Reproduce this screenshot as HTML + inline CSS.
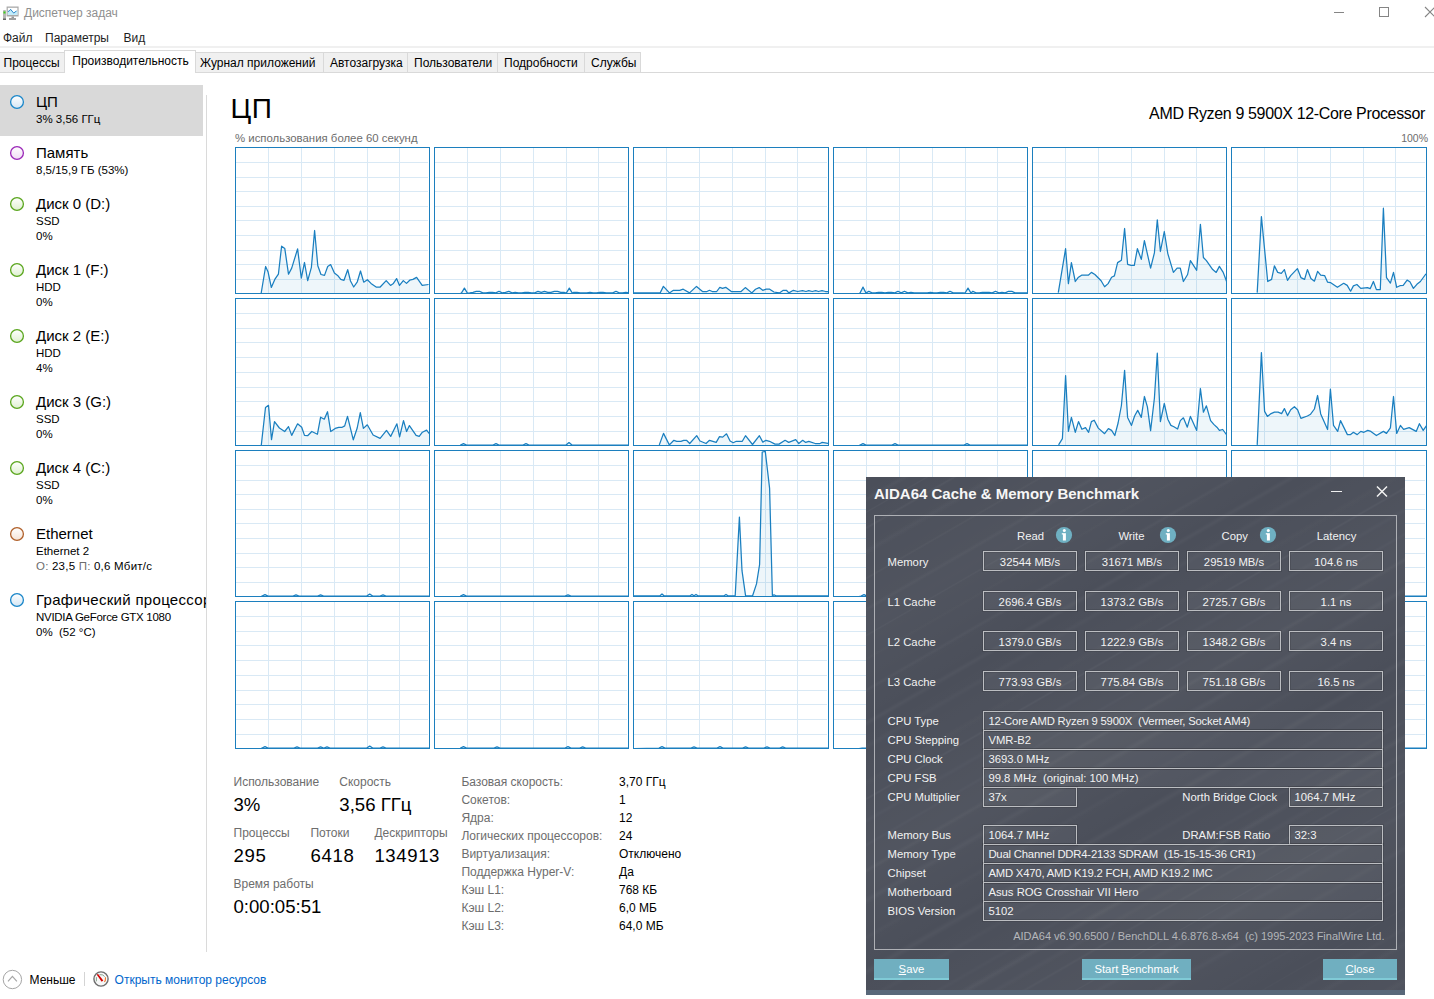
<!DOCTYPE html>
<html><head><meta charset="utf-8"><title>Task Manager</title>
<style>
html,body{margin:0;padding:0;width:1434px;height:999px;overflow:hidden;background:#fff;position:relative}
.t{position:absolute;line-height:0;white-space:nowrap;font-family:"Liberation Sans", sans-serif}
u{text-underline-offset:1px}
</style></head><body>
<svg style="position:absolute;left:0;top:0" width="24" height="24" viewBox="0 0 24 24">
<rect x="3" y="10" width="3" height="10" rx="1" fill="#b8b8b8"/><rect x="3" y="18.5" width="3" height="1.5" fill="#666"/>
<rect x="3.5" y="11.5" width="2" height="2" fill="#3ecf1a"/>
<rect x="6.6" y="6.5" width="12" height="10" fill="#a9a9a9"/>
<rect x="7.8" y="7.8" width="9.6" height="7.2" fill="#fff"/>
<path d="M7.8 11.3 L9 11.3 L10.6 9.3 L13.7 13.1 L15 12 L17.4 10.7 L17.4 15 L7.8 15 Z" fill="#c3ecfb"/>
<path d="M7.8 11.3 L9 11.3 L10.6 9.3 L13.7 13.1 L15 12 L16.6 11" fill="none" stroke="#2a86c8" stroke-width="1"/>
<rect x="11.5" y="16.5" width="2.5" height="1.5" fill="#999"/><rect x="9" y="18" width="7" height="2" fill="#a0a0a0"/>
</svg>
<div class="t" style="left:24px;top:13px;font-size:12px;color:#8f8f8f;font-weight:400;">Диспетчер задач</div>
<div style="position:absolute;left:1334px;top:12px;width:10px;height:1px;background:#858585"></div>
<div style="position:absolute;left:1379px;top:7px;width:10px;height:10px;box-sizing:border-box;border:1px solid #858585"></div>
<svg style="position:absolute;left:1420;top:0;left:1420px" width="14" height="24"><path d="M5 7 L15 17 M15 7 L5 17" stroke="#858585" stroke-width="1.1"/></svg>
<div class="t" style="left:3px;top:38px;font-size:12px;color:#1e1e1e;font-weight:400;">Файл</div>
<div class="t" style="left:45px;top:38px;font-size:12px;color:#1e1e1e;font-weight:400;">Параметры</div>
<div class="t" style="left:123.5px;top:38px;font-size:12px;color:#1e1e1e;font-weight:400;">Вид</div>
<div style="position:absolute;left:0px;top:46px;width:1434px;height:2px;background:#f0f0f0"></div>
<div style="position:absolute;left:0px;top:72px;width:1434px;height:1px;background:#d9d9d9"></div>
<div style="position:absolute;left:-1px;top:52px;width:66px;height:21px;box-sizing:border-box;border:1px solid #d9d9d9;background:#f0f0f0"></div>
<div class="t" style="left:3.5px;top:62.5px;font-size:12px;color:#000;font-weight:400;">Процессы</div>
<div style="position:absolute;left:195px;top:52px;width:129px;height:21px;box-sizing:border-box;border:1px solid #d9d9d9;background:#f0f0f0"></div>
<div class="t" style="left:200px;top:62.5px;font-size:12px;color:#000;font-weight:400;">Журнал приложений</div>
<div style="position:absolute;left:323px;top:52px;width:85px;height:21px;box-sizing:border-box;border:1px solid #d9d9d9;background:#f0f0f0"></div>
<div class="t" style="left:330px;top:62.5px;font-size:12px;color:#000;font-weight:400;">Автозагрузка</div>
<div style="position:absolute;left:407px;top:52px;width:91px;height:21px;box-sizing:border-box;border:1px solid #d9d9d9;background:#f0f0f0"></div>
<div class="t" style="left:414px;top:62.5px;font-size:12px;color:#000;font-weight:400;">Пользователи</div>
<div style="position:absolute;left:497px;top:52px;width:88px;height:21px;box-sizing:border-box;border:1px solid #d9d9d9;background:#f0f0f0"></div>
<div class="t" style="left:504px;top:62.5px;font-size:12px;color:#000;font-weight:400;">Подробности</div>
<div style="position:absolute;left:584px;top:52px;width:57px;height:21px;box-sizing:border-box;border:1px solid #d9d9d9;background:#f0f0f0"></div>
<div class="t" style="left:591px;top:62.5px;font-size:12px;color:#000;font-weight:400;">Службы</div>
<div style="position:absolute;left:64px;top:50px;width:132px;height:23px;box-sizing:border-box;border:1px solid #d9d9d9;border-bottom:none;background:#fff"></div>
<div class="t" style="left:72.3px;top:61px;font-size:12px;color:#000;font-weight:400;">Производительность</div>
<div style="position:absolute;left:0px;top:85px;width:203px;height:51px;background:#d9d9d9"></div>
<div style="position:absolute;left:206px;top:95px;width:1px;height:857px;background:#dadada"></div>
<div style="position:absolute;left:0;top:0;width:206px;height:999px;overflow:hidden">
<svg style="position:absolute;left:9px;top:94px" width="16" height="16"><defs><linearGradient id="g102" x1="0" y1="0" x2="0" y2="1"><stop offset="0" stop-color="#fff"/><stop offset="1" stop-color="#d4e6f4"/></linearGradient></defs><circle cx="8" cy="8" r="6.4" fill="url(#g102)" stroke="#1a86c9" stroke-width="1.3"/></svg>
<div class="t" style="left:36px;top:102px;font-size:15px;color:#000;font-weight:400;">ЦП</div>
<div class="t" style="left:36px;top:119px;font-size:11.5px;color:#000;font-weight:400;">3% 3,56 ГГц</div>
<svg style="position:absolute;left:9px;top:145px" width="16" height="16"><defs><linearGradient id="g153" x1="0" y1="0" x2="0" y2="1"><stop offset="0" stop-color="#fff"/><stop offset="1" stop-color="#f0dcf5"/></linearGradient></defs><circle cx="8" cy="8" r="6.4" fill="url(#g153)" stroke="#9b28b8" stroke-width="1.3"/></svg>
<div class="t" style="left:36px;top:153px;font-size:15px;color:#000;font-weight:400;">Память</div>
<div class="t" style="left:36px;top:170px;font-size:11.5px;color:#000;font-weight:400;">8,5/15,9 ГБ (53%)</div>
<svg style="position:absolute;left:9px;top:196px" width="16" height="16"><defs><linearGradient id="g204" x1="0" y1="0" x2="0" y2="1"><stop offset="0" stop-color="#fff"/><stop offset="1" stop-color="#dff0d0"/></linearGradient></defs><circle cx="8" cy="8" r="6.4" fill="url(#g204)" stroke="#5aa61e" stroke-width="1.3"/></svg>
<div class="t" style="left:36px;top:204px;font-size:15px;color:#000;font-weight:400;">Диск 0 (D:)</div>
<div class="t" style="left:36px;top:221px;font-size:11.5px;color:#000;font-weight:400;">SSD</div>
<div class="t" style="left:36px;top:236px;font-size:11.5px;color:#000;font-weight:400;">0%</div>
<svg style="position:absolute;left:9px;top:262px" width="16" height="16"><defs><linearGradient id="g270" x1="0" y1="0" x2="0" y2="1"><stop offset="0" stop-color="#fff"/><stop offset="1" stop-color="#dff0d0"/></linearGradient></defs><circle cx="8" cy="8" r="6.4" fill="url(#g270)" stroke="#5aa61e" stroke-width="1.3"/></svg>
<div class="t" style="left:36px;top:270px;font-size:15px;color:#000;font-weight:400;">Диск 1 (F:)</div>
<div class="t" style="left:36px;top:287px;font-size:11.5px;color:#000;font-weight:400;">HDD</div>
<div class="t" style="left:36px;top:302px;font-size:11.5px;color:#000;font-weight:400;">0%</div>
<svg style="position:absolute;left:9px;top:328px" width="16" height="16"><defs><linearGradient id="g336" x1="0" y1="0" x2="0" y2="1"><stop offset="0" stop-color="#fff"/><stop offset="1" stop-color="#dff0d0"/></linearGradient></defs><circle cx="8" cy="8" r="6.4" fill="url(#g336)" stroke="#5aa61e" stroke-width="1.3"/></svg>
<div class="t" style="left:36px;top:336px;font-size:15px;color:#000;font-weight:400;">Диск 2 (E:)</div>
<div class="t" style="left:36px;top:353px;font-size:11.5px;color:#000;font-weight:400;">HDD</div>
<div class="t" style="left:36px;top:368px;font-size:11.5px;color:#000;font-weight:400;">4%</div>
<svg style="position:absolute;left:9px;top:394px" width="16" height="16"><defs><linearGradient id="g402" x1="0" y1="0" x2="0" y2="1"><stop offset="0" stop-color="#fff"/><stop offset="1" stop-color="#dff0d0"/></linearGradient></defs><circle cx="8" cy="8" r="6.4" fill="url(#g402)" stroke="#5aa61e" stroke-width="1.3"/></svg>
<div class="t" style="left:36px;top:402px;font-size:15px;color:#000;font-weight:400;">Диск 3 (G:)</div>
<div class="t" style="left:36px;top:419px;font-size:11.5px;color:#000;font-weight:400;">SSD</div>
<div class="t" style="left:36px;top:434px;font-size:11.5px;color:#000;font-weight:400;">0%</div>
<svg style="position:absolute;left:9px;top:460px" width="16" height="16"><defs><linearGradient id="g468" x1="0" y1="0" x2="0" y2="1"><stop offset="0" stop-color="#fff"/><stop offset="1" stop-color="#dff0d0"/></linearGradient></defs><circle cx="8" cy="8" r="6.4" fill="url(#g468)" stroke="#5aa61e" stroke-width="1.3"/></svg>
<div class="t" style="left:36px;top:468px;font-size:15px;color:#000;font-weight:400;">Диск 4 (C:)</div>
<div class="t" style="left:36px;top:485px;font-size:11.5px;color:#000;font-weight:400;">SSD</div>
<div class="t" style="left:36px;top:500px;font-size:11.5px;color:#000;font-weight:400;">0%</div>
<svg style="position:absolute;left:9px;top:526px" width="16" height="16"><defs><linearGradient id="g534" x1="0" y1="0" x2="0" y2="1"><stop offset="0" stop-color="#fff"/><stop offset="1" stop-color="#f5e3d6"/></linearGradient></defs><circle cx="8" cy="8" r="6.4" fill="url(#g534)" stroke="#b0602a" stroke-width="1.3"/></svg>
<div class="t" style="left:36px;top:534px;font-size:15px;color:#000;font-weight:400;">Ethernet</div>
<div class="t" style="left:36px;top:551px;font-size:11.5px;color:#000;font-weight:400;">Ethernet 2</div>
<div class="t" style="left:36px;top:566px;font-size:11.5px;color:#000;font-weight:400;letter-spacing:0.22px;"><span style="color:#6d6d6d">О:</span> 23,5 <span style="color:#6d6d6d">П:</span> 0,6 Мбит/с</div>
<svg style="position:absolute;left:9px;top:592px" width="16" height="16"><defs><linearGradient id="g600" x1="0" y1="0" x2="0" y2="1"><stop offset="0" stop-color="#fff"/><stop offset="1" stop-color="#d4e6f4"/></linearGradient></defs><circle cx="8" cy="8" r="6.4" fill="url(#g600)" stroke="#1a86c9" stroke-width="1.3"/></svg>
<div class="t" style="left:36px;top:600px;font-size:15px;color:#000;font-weight:400;letter-spacing:0.3px;">Графический процессор</div>
<div class="t" style="left:36px;top:617px;font-size:11.5px;color:#000;font-weight:400;letter-spacing:-0.28px;">NVIDIA GeForce GTX 1080</div>
<div class="t" style="left:36px;top:632px;font-size:11.5px;color:#000;font-weight:400;">0% &nbsp;(52 °C)</div>
</div>
<div class="t" style="left:230.5px;top:109px;font-size:28px;color:#000;font-weight:400;letter-spacing:0.6px;">ЦП</div>
<div class="t" style="right:9px;top:114px;font-size:16px;color:#000;font-weight:400;letter-spacing:-0.35px;">AMD Ryzen 9 5900X 12-Core Processor</div>
<div class="t" style="left:235px;top:138px;font-size:11.4px;color:#6d6d6d;font-weight:400;">% использования более 60 секунд</div>
<div class="t" style="right:6px;top:138px;font-size:10.5px;color:#6d6d6d;font-weight:400;">100%</div>
<svg style="position:absolute;left:0;top:0" width="1434" height="999">
<g shape-rendering="crispEdges" fill="#d9e9f5">
<rect x="236" y="162" width="192" height="1"/>
<rect x="236" y="177" width="192" height="1"/>
<rect x="236" y="191" width="192" height="1"/>
<rect x="236" y="206" width="192" height="1"/>
<rect x="236" y="220" width="192" height="1"/>
<rect x="236" y="235" width="192" height="1"/>
<rect x="236" y="250" width="192" height="1"/>
<rect x="236" y="264" width="192" height="1"/>
<rect x="236" y="279" width="192" height="1"/>
<rect x="268" y="148" width="1" height="145"/>
<rect x="301" y="148" width="1" height="145"/>
<rect x="334" y="148" width="1" height="145"/>
<rect x="367" y="148" width="1" height="145"/>
<rect x="399" y="148" width="1" height="145"/>
<rect x="435" y="162" width="192" height="1"/>
<rect x="435" y="177" width="192" height="1"/>
<rect x="435" y="191" width="192" height="1"/>
<rect x="435" y="206" width="192" height="1"/>
<rect x="435" y="220" width="192" height="1"/>
<rect x="435" y="235" width="192" height="1"/>
<rect x="435" y="250" width="192" height="1"/>
<rect x="435" y="264" width="192" height="1"/>
<rect x="435" y="279" width="192" height="1"/>
<rect x="467" y="148" width="1" height="145"/>
<rect x="500" y="148" width="1" height="145"/>
<rect x="533" y="148" width="1" height="145"/>
<rect x="566" y="148" width="1" height="145"/>
<rect x="598" y="148" width="1" height="145"/>
<rect x="634" y="162" width="193" height="1"/>
<rect x="634" y="177" width="193" height="1"/>
<rect x="634" y="191" width="193" height="1"/>
<rect x="634" y="206" width="193" height="1"/>
<rect x="634" y="220" width="193" height="1"/>
<rect x="634" y="235" width="193" height="1"/>
<rect x="634" y="250" width="193" height="1"/>
<rect x="634" y="264" width="193" height="1"/>
<rect x="634" y="279" width="193" height="1"/>
<rect x="666" y="148" width="1" height="145"/>
<rect x="699" y="148" width="1" height="145"/>
<rect x="732" y="148" width="1" height="145"/>
<rect x="765" y="148" width="1" height="145"/>
<rect x="797" y="148" width="1" height="145"/>
<rect x="834" y="162" width="192" height="1"/>
<rect x="834" y="177" width="192" height="1"/>
<rect x="834" y="191" width="192" height="1"/>
<rect x="834" y="206" width="192" height="1"/>
<rect x="834" y="220" width="192" height="1"/>
<rect x="834" y="235" width="192" height="1"/>
<rect x="834" y="250" width="192" height="1"/>
<rect x="834" y="264" width="192" height="1"/>
<rect x="834" y="279" width="192" height="1"/>
<rect x="866" y="148" width="1" height="145"/>
<rect x="899" y="148" width="1" height="145"/>
<rect x="932" y="148" width="1" height="145"/>
<rect x="965" y="148" width="1" height="145"/>
<rect x="997" y="148" width="1" height="145"/>
<rect x="1033" y="162" width="192" height="1"/>
<rect x="1033" y="177" width="192" height="1"/>
<rect x="1033" y="191" width="192" height="1"/>
<rect x="1033" y="206" width="192" height="1"/>
<rect x="1033" y="220" width="192" height="1"/>
<rect x="1033" y="235" width="192" height="1"/>
<rect x="1033" y="250" width="192" height="1"/>
<rect x="1033" y="264" width="192" height="1"/>
<rect x="1033" y="279" width="192" height="1"/>
<rect x="1065" y="148" width="1" height="145"/>
<rect x="1098" y="148" width="1" height="145"/>
<rect x="1131" y="148" width="1" height="145"/>
<rect x="1164" y="148" width="1" height="145"/>
<rect x="1196" y="148" width="1" height="145"/>
<rect x="1232" y="162" width="193" height="1"/>
<rect x="1232" y="177" width="193" height="1"/>
<rect x="1232" y="191" width="193" height="1"/>
<rect x="1232" y="206" width="193" height="1"/>
<rect x="1232" y="220" width="193" height="1"/>
<rect x="1232" y="235" width="193" height="1"/>
<rect x="1232" y="250" width="193" height="1"/>
<rect x="1232" y="264" width="193" height="1"/>
<rect x="1232" y="279" width="193" height="1"/>
<rect x="1264" y="148" width="1" height="145"/>
<rect x="1297" y="148" width="1" height="145"/>
<rect x="1330" y="148" width="1" height="145"/>
<rect x="1363" y="148" width="1" height="145"/>
<rect x="1395" y="148" width="1" height="145"/>
<rect x="236" y="313" width="192" height="1"/>
<rect x="236" y="328" width="192" height="1"/>
<rect x="236" y="342" width="192" height="1"/>
<rect x="236" y="357" width="192" height="1"/>
<rect x="236" y="372" width="192" height="1"/>
<rect x="236" y="387" width="192" height="1"/>
<rect x="236" y="401" width="192" height="1"/>
<rect x="236" y="416" width="192" height="1"/>
<rect x="236" y="431" width="192" height="1"/>
<rect x="268" y="299" width="1" height="146"/>
<rect x="301" y="299" width="1" height="146"/>
<rect x="334" y="299" width="1" height="146"/>
<rect x="367" y="299" width="1" height="146"/>
<rect x="399" y="299" width="1" height="146"/>
<rect x="435" y="313" width="192" height="1"/>
<rect x="435" y="328" width="192" height="1"/>
<rect x="435" y="342" width="192" height="1"/>
<rect x="435" y="357" width="192" height="1"/>
<rect x="435" y="372" width="192" height="1"/>
<rect x="435" y="387" width="192" height="1"/>
<rect x="435" y="401" width="192" height="1"/>
<rect x="435" y="416" width="192" height="1"/>
<rect x="435" y="431" width="192" height="1"/>
<rect x="467" y="299" width="1" height="146"/>
<rect x="500" y="299" width="1" height="146"/>
<rect x="533" y="299" width="1" height="146"/>
<rect x="566" y="299" width="1" height="146"/>
<rect x="598" y="299" width="1" height="146"/>
<rect x="634" y="313" width="193" height="1"/>
<rect x="634" y="328" width="193" height="1"/>
<rect x="634" y="342" width="193" height="1"/>
<rect x="634" y="357" width="193" height="1"/>
<rect x="634" y="372" width="193" height="1"/>
<rect x="634" y="387" width="193" height="1"/>
<rect x="634" y="401" width="193" height="1"/>
<rect x="634" y="416" width="193" height="1"/>
<rect x="634" y="431" width="193" height="1"/>
<rect x="666" y="299" width="1" height="146"/>
<rect x="699" y="299" width="1" height="146"/>
<rect x="732" y="299" width="1" height="146"/>
<rect x="765" y="299" width="1" height="146"/>
<rect x="797" y="299" width="1" height="146"/>
<rect x="834" y="313" width="192" height="1"/>
<rect x="834" y="328" width="192" height="1"/>
<rect x="834" y="342" width="192" height="1"/>
<rect x="834" y="357" width="192" height="1"/>
<rect x="834" y="372" width="192" height="1"/>
<rect x="834" y="387" width="192" height="1"/>
<rect x="834" y="401" width="192" height="1"/>
<rect x="834" y="416" width="192" height="1"/>
<rect x="834" y="431" width="192" height="1"/>
<rect x="866" y="299" width="1" height="146"/>
<rect x="899" y="299" width="1" height="146"/>
<rect x="932" y="299" width="1" height="146"/>
<rect x="965" y="299" width="1" height="146"/>
<rect x="997" y="299" width="1" height="146"/>
<rect x="1033" y="313" width="192" height="1"/>
<rect x="1033" y="328" width="192" height="1"/>
<rect x="1033" y="342" width="192" height="1"/>
<rect x="1033" y="357" width="192" height="1"/>
<rect x="1033" y="372" width="192" height="1"/>
<rect x="1033" y="387" width="192" height="1"/>
<rect x="1033" y="401" width="192" height="1"/>
<rect x="1033" y="416" width="192" height="1"/>
<rect x="1033" y="431" width="192" height="1"/>
<rect x="1065" y="299" width="1" height="146"/>
<rect x="1098" y="299" width="1" height="146"/>
<rect x="1131" y="299" width="1" height="146"/>
<rect x="1164" y="299" width="1" height="146"/>
<rect x="1196" y="299" width="1" height="146"/>
<rect x="1232" y="313" width="193" height="1"/>
<rect x="1232" y="328" width="193" height="1"/>
<rect x="1232" y="342" width="193" height="1"/>
<rect x="1232" y="357" width="193" height="1"/>
<rect x="1232" y="372" width="193" height="1"/>
<rect x="1232" y="387" width="193" height="1"/>
<rect x="1232" y="401" width="193" height="1"/>
<rect x="1232" y="416" width="193" height="1"/>
<rect x="1232" y="431" width="193" height="1"/>
<rect x="1264" y="299" width="1" height="146"/>
<rect x="1297" y="299" width="1" height="146"/>
<rect x="1330" y="299" width="1" height="146"/>
<rect x="1363" y="299" width="1" height="146"/>
<rect x="1395" y="299" width="1" height="146"/>
<rect x="236" y="465" width="192" height="1"/>
<rect x="236" y="480" width="192" height="1"/>
<rect x="236" y="494" width="192" height="1"/>
<rect x="236" y="509" width="192" height="1"/>
<rect x="236" y="523" width="192" height="1"/>
<rect x="236" y="538" width="192" height="1"/>
<rect x="236" y="553" width="192" height="1"/>
<rect x="236" y="567" width="192" height="1"/>
<rect x="236" y="582" width="192" height="1"/>
<rect x="268" y="451" width="1" height="145"/>
<rect x="301" y="451" width="1" height="145"/>
<rect x="334" y="451" width="1" height="145"/>
<rect x="367" y="451" width="1" height="145"/>
<rect x="399" y="451" width="1" height="145"/>
<rect x="435" y="465" width="192" height="1"/>
<rect x="435" y="480" width="192" height="1"/>
<rect x="435" y="494" width="192" height="1"/>
<rect x="435" y="509" width="192" height="1"/>
<rect x="435" y="523" width="192" height="1"/>
<rect x="435" y="538" width="192" height="1"/>
<rect x="435" y="553" width="192" height="1"/>
<rect x="435" y="567" width="192" height="1"/>
<rect x="435" y="582" width="192" height="1"/>
<rect x="467" y="451" width="1" height="145"/>
<rect x="500" y="451" width="1" height="145"/>
<rect x="533" y="451" width="1" height="145"/>
<rect x="566" y="451" width="1" height="145"/>
<rect x="598" y="451" width="1" height="145"/>
<rect x="634" y="465" width="193" height="1"/>
<rect x="634" y="480" width="193" height="1"/>
<rect x="634" y="494" width="193" height="1"/>
<rect x="634" y="509" width="193" height="1"/>
<rect x="634" y="523" width="193" height="1"/>
<rect x="634" y="538" width="193" height="1"/>
<rect x="634" y="553" width="193" height="1"/>
<rect x="634" y="567" width="193" height="1"/>
<rect x="634" y="582" width="193" height="1"/>
<rect x="666" y="451" width="1" height="145"/>
<rect x="699" y="451" width="1" height="145"/>
<rect x="732" y="451" width="1" height="145"/>
<rect x="765" y="451" width="1" height="145"/>
<rect x="797" y="451" width="1" height="145"/>
<rect x="834" y="465" width="192" height="1"/>
<rect x="834" y="480" width="192" height="1"/>
<rect x="834" y="494" width="192" height="1"/>
<rect x="834" y="509" width="192" height="1"/>
<rect x="834" y="523" width="192" height="1"/>
<rect x="834" y="538" width="192" height="1"/>
<rect x="834" y="553" width="192" height="1"/>
<rect x="834" y="567" width="192" height="1"/>
<rect x="834" y="582" width="192" height="1"/>
<rect x="866" y="451" width="1" height="145"/>
<rect x="899" y="451" width="1" height="145"/>
<rect x="932" y="451" width="1" height="145"/>
<rect x="965" y="451" width="1" height="145"/>
<rect x="997" y="451" width="1" height="145"/>
<rect x="1033" y="465" width="192" height="1"/>
<rect x="1033" y="480" width="192" height="1"/>
<rect x="1033" y="494" width="192" height="1"/>
<rect x="1033" y="509" width="192" height="1"/>
<rect x="1033" y="523" width="192" height="1"/>
<rect x="1033" y="538" width="192" height="1"/>
<rect x="1033" y="553" width="192" height="1"/>
<rect x="1033" y="567" width="192" height="1"/>
<rect x="1033" y="582" width="192" height="1"/>
<rect x="1065" y="451" width="1" height="145"/>
<rect x="1098" y="451" width="1" height="145"/>
<rect x="1131" y="451" width="1" height="145"/>
<rect x="1164" y="451" width="1" height="145"/>
<rect x="1196" y="451" width="1" height="145"/>
<rect x="1232" y="465" width="193" height="1"/>
<rect x="1232" y="480" width="193" height="1"/>
<rect x="1232" y="494" width="193" height="1"/>
<rect x="1232" y="509" width="193" height="1"/>
<rect x="1232" y="523" width="193" height="1"/>
<rect x="1232" y="538" width="193" height="1"/>
<rect x="1232" y="553" width="193" height="1"/>
<rect x="1232" y="567" width="193" height="1"/>
<rect x="1232" y="582" width="193" height="1"/>
<rect x="1264" y="451" width="1" height="145"/>
<rect x="1297" y="451" width="1" height="145"/>
<rect x="1330" y="451" width="1" height="145"/>
<rect x="1363" y="451" width="1" height="145"/>
<rect x="1395" y="451" width="1" height="145"/>
<rect x="236" y="616" width="192" height="1"/>
<rect x="236" y="631" width="192" height="1"/>
<rect x="236" y="645" width="192" height="1"/>
<rect x="236" y="660" width="192" height="1"/>
<rect x="236" y="675" width="192" height="1"/>
<rect x="236" y="690" width="192" height="1"/>
<rect x="236" y="704" width="192" height="1"/>
<rect x="236" y="719" width="192" height="1"/>
<rect x="236" y="734" width="192" height="1"/>
<rect x="268" y="602" width="1" height="146"/>
<rect x="301" y="602" width="1" height="146"/>
<rect x="334" y="602" width="1" height="146"/>
<rect x="367" y="602" width="1" height="146"/>
<rect x="399" y="602" width="1" height="146"/>
<rect x="435" y="616" width="192" height="1"/>
<rect x="435" y="631" width="192" height="1"/>
<rect x="435" y="645" width="192" height="1"/>
<rect x="435" y="660" width="192" height="1"/>
<rect x="435" y="675" width="192" height="1"/>
<rect x="435" y="690" width="192" height="1"/>
<rect x="435" y="704" width="192" height="1"/>
<rect x="435" y="719" width="192" height="1"/>
<rect x="435" y="734" width="192" height="1"/>
<rect x="467" y="602" width="1" height="146"/>
<rect x="500" y="602" width="1" height="146"/>
<rect x="533" y="602" width="1" height="146"/>
<rect x="566" y="602" width="1" height="146"/>
<rect x="598" y="602" width="1" height="146"/>
<rect x="634" y="616" width="193" height="1"/>
<rect x="634" y="631" width="193" height="1"/>
<rect x="634" y="645" width="193" height="1"/>
<rect x="634" y="660" width="193" height="1"/>
<rect x="634" y="675" width="193" height="1"/>
<rect x="634" y="690" width="193" height="1"/>
<rect x="634" y="704" width="193" height="1"/>
<rect x="634" y="719" width="193" height="1"/>
<rect x="634" y="734" width="193" height="1"/>
<rect x="666" y="602" width="1" height="146"/>
<rect x="699" y="602" width="1" height="146"/>
<rect x="732" y="602" width="1" height="146"/>
<rect x="765" y="602" width="1" height="146"/>
<rect x="797" y="602" width="1" height="146"/>
<rect x="834" y="616" width="192" height="1"/>
<rect x="834" y="631" width="192" height="1"/>
<rect x="834" y="645" width="192" height="1"/>
<rect x="834" y="660" width="192" height="1"/>
<rect x="834" y="675" width="192" height="1"/>
<rect x="834" y="690" width="192" height="1"/>
<rect x="834" y="704" width="192" height="1"/>
<rect x="834" y="719" width="192" height="1"/>
<rect x="834" y="734" width="192" height="1"/>
<rect x="866" y="602" width="1" height="146"/>
<rect x="899" y="602" width="1" height="146"/>
<rect x="932" y="602" width="1" height="146"/>
<rect x="965" y="602" width="1" height="146"/>
<rect x="997" y="602" width="1" height="146"/>
<rect x="1033" y="616" width="192" height="1"/>
<rect x="1033" y="631" width="192" height="1"/>
<rect x="1033" y="645" width="192" height="1"/>
<rect x="1033" y="660" width="192" height="1"/>
<rect x="1033" y="675" width="192" height="1"/>
<rect x="1033" y="690" width="192" height="1"/>
<rect x="1033" y="704" width="192" height="1"/>
<rect x="1033" y="719" width="192" height="1"/>
<rect x="1033" y="734" width="192" height="1"/>
<rect x="1065" y="602" width="1" height="146"/>
<rect x="1098" y="602" width="1" height="146"/>
<rect x="1131" y="602" width="1" height="146"/>
<rect x="1164" y="602" width="1" height="146"/>
<rect x="1196" y="602" width="1" height="146"/>
<rect x="1232" y="616" width="193" height="1"/>
<rect x="1232" y="631" width="193" height="1"/>
<rect x="1232" y="645" width="193" height="1"/>
<rect x="1232" y="660" width="193" height="1"/>
<rect x="1232" y="675" width="193" height="1"/>
<rect x="1232" y="690" width="193" height="1"/>
<rect x="1232" y="704" width="193" height="1"/>
<rect x="1232" y="719" width="193" height="1"/>
<rect x="1232" y="734" width="193" height="1"/>
<rect x="1264" y="602" width="1" height="146"/>
<rect x="1297" y="602" width="1" height="146"/>
<rect x="1330" y="602" width="1" height="146"/>
<rect x="1363" y="602" width="1" height="146"/>
<rect x="1395" y="602" width="1" height="146"/>
</g>
<defs>
<clipPath id="c00"><rect x="236" y="148" width="193" height="145"/></clipPath>
<clipPath id="c01"><rect x="435" y="148" width="193" height="145"/></clipPath>
<clipPath id="c02"><rect x="634" y="148" width="194" height="145"/></clipPath>
<clipPath id="c03"><rect x="834" y="148" width="193" height="145"/></clipPath>
<clipPath id="c04"><rect x="1033" y="148" width="193" height="145"/></clipPath>
<clipPath id="c05"><rect x="1232" y="148" width="194" height="145"/></clipPath>
<clipPath id="c10"><rect x="236" y="299" width="193" height="146"/></clipPath>
<clipPath id="c11"><rect x="435" y="299" width="193" height="146"/></clipPath>
<clipPath id="c12"><rect x="634" y="299" width="194" height="146"/></clipPath>
<clipPath id="c13"><rect x="834" y="299" width="193" height="146"/></clipPath>
<clipPath id="c14"><rect x="1033" y="299" width="193" height="146"/></clipPath>
<clipPath id="c15"><rect x="1232" y="299" width="194" height="146"/></clipPath>
<clipPath id="c20"><rect x="236" y="451" width="193" height="145"/></clipPath>
<clipPath id="c21"><rect x="435" y="451" width="193" height="145"/></clipPath>
<clipPath id="c22"><rect x="634" y="451" width="194" height="145"/></clipPath>
<clipPath id="c23"><rect x="834" y="451" width="193" height="145"/></clipPath>
<clipPath id="c24"><rect x="1033" y="451" width="193" height="145"/></clipPath>
<clipPath id="c25"><rect x="1232" y="451" width="194" height="145"/></clipPath>
<clipPath id="c30"><rect x="236" y="602" width="193" height="146"/></clipPath>
<clipPath id="c31"><rect x="435" y="602" width="193" height="146"/></clipPath>
<clipPath id="c32"><rect x="634" y="602" width="194" height="146"/></clipPath>
<clipPath id="c33"><rect x="834" y="602" width="193" height="146"/></clipPath>
<clipPath id="c34"><rect x="1033" y="602" width="193" height="146"/></clipPath>
<clipPath id="c35"><rect x="1232" y="602" width="194" height="146"/></clipPath>
</defs>
<g clip-path="url(#c00)"><polygon points="261.2,293.0 265.6,266.5 268.1,272.1 271.3,287.4 274.8,279.4 278.4,274.2 281.6,246.2 284.8,248.6 288.5,274.2 291.7,268.1 297.6,248.9 301.3,278.1 304.5,262.5 307.7,280.6 311.4,267.3 314.6,230.5 317.8,265.7 321.0,274.5 324.5,275.4 327.7,266.5 330.6,264.6 334.4,273.0 337.6,275.4 340.8,279.4 344.0,280.3 347.7,269.7 350.5,281.0 353.7,287.0 357.3,281.8 360.5,271.0 363.7,282.2 367.4,279.7 371.0,283.4 376.1,287.0 380.2,287.0 386.2,280.6 390.5,285.4 393.4,283.4 396.6,278.6 399.5,285.4 403.3,280.6 406.5,283.4 409.7,280.2 412.9,279.4 416.6,277.4 422.2,285.4 428.6,284.5 428.6,294 261.2,294" fill="#117dbb" fill-opacity="0.07"/><polyline points="261.2,293.0 265.6,266.5 268.1,272.1 271.3,287.4 274.8,279.4 278.4,274.2 281.6,246.2 284.8,248.6 288.5,274.2 291.7,268.1 297.6,248.9 301.3,278.1 304.5,262.5 307.7,280.6 311.4,267.3 314.6,230.5 317.8,265.7 321.0,274.5 324.5,275.4 327.7,266.5 330.6,264.6 334.4,273.0 337.6,275.4 340.8,279.4 344.0,280.3 347.7,269.7 350.5,281.0 353.7,287.0 357.3,281.8 360.5,271.0 363.7,282.2 367.4,279.7 371.0,283.4 376.1,287.0 380.2,287.0 386.2,280.6 390.5,285.4 393.4,283.4 396.6,278.6 399.5,285.4 403.3,280.6 406.5,283.4 409.7,280.2 412.9,279.4 416.6,277.4 422.2,285.4 428.6,284.5" fill="none" stroke="#1a7fc0" stroke-width="1.25" stroke-linejoin="round"/></g>
<g clip-path="url(#c01)"><polygon points="434.0,293.6 460.0,293.6 461.4,293.1 464.4,288.1 467.4,293.1 469.8,292.9 473.0,292.3 476.2,291.3 479.5,291.3 482.8,292.9 486.0,292.9 489.2,292.3 492.5,292.3 495.8,292.9 499.0,291.3 502.2,292.9 505.5,292.3 508.8,291.3 512.0,292.9 515.2,292.3 518.5,292.9 521.8,292.9 525.0,292.3 528.2,292.3 531.5,292.9 534.8,292.9 538.0,291.3 541.2,292.3 544.5,291.3 547.8,292.3 551.0,292.3 554.2,291.3 557.5,291.3 560.8,292.3 564.0,292.3 566.3,293.1 569.3,288.1 572.3,293.1 573.8,292.3 577.0,292.3 580.2,292.9 583.5,292.9 586.8,292.9 590.0,292.3 593.2,292.9 596.5,292.9 599.8,292.3 603.0,292.3 606.2,292.9 609.5,292.9 612.8,292.9 616.0,291.3 619.2,292.9 622.5,292.9 625.8,292.3 629.0,292.9 629.0,294 434.0,294" fill="#117dbb" fill-opacity="0.07"/><polyline points="434.0,293.6 460.0,293.6 461.4,293.1 464.4,288.1 467.4,293.1 469.8,292.9 473.0,292.3 476.2,291.3 479.5,291.3 482.8,292.9 486.0,292.9 489.2,292.3 492.5,292.3 495.8,292.9 499.0,291.3 502.2,292.9 505.5,292.3 508.8,291.3 512.0,292.9 515.2,292.3 518.5,292.9 521.8,292.9 525.0,292.3 528.2,292.3 531.5,292.9 534.8,292.9 538.0,291.3 541.2,292.3 544.5,291.3 547.8,292.3 551.0,292.3 554.2,291.3 557.5,291.3 560.8,292.3 564.0,292.3 566.3,293.1 569.3,288.1 572.3,293.1 573.8,292.3 577.0,292.3 580.2,292.9 583.5,292.9 586.8,292.9 590.0,292.3 593.2,292.9 596.5,292.9 599.8,292.3 603.0,292.3 606.2,292.9 609.5,292.9 612.8,292.9 616.0,291.3 619.2,292.9 622.5,292.9 625.8,292.3 629.0,292.9" fill="none" stroke="#1a7fc0" stroke-width="1.25" stroke-linejoin="round"/></g>
<g clip-path="url(#c02)"><polygon points="633.0,292.9 660.2,292.9 663.4,286.4 669.5,292.9 673.4,290.3 679.7,290.3 683.2,289.2 689.5,292.9 696.5,286.4 702.5,291.5 707.0,291.5 709.4,290.3 712.2,291.5 716.7,291.5 719.8,287.3 722.5,288.3 725.7,287.3 731.3,291.5 741.1,291.5 745.3,287.6 751.8,292.9 755.5,289.2 759.2,287.6 762.7,290.3 766.2,289.2 769.7,289.2 773.9,292.0 779.4,292.9 783.3,290.3 786.4,290.3 788.9,292.9 793.4,290.3 797.6,291.5 802.5,290.6 806.0,291.5 808.7,290.6 812.2,291.5 815.7,290.6 818.5,291.5 822.0,290.6 825.5,291.5 828.3,291.5 828.3,294 633.0,294" fill="#117dbb" fill-opacity="0.07"/><polyline points="633.0,292.9 660.2,292.9 663.4,286.4 669.5,292.9 673.4,290.3 679.7,290.3 683.2,289.2 689.5,292.9 696.5,286.4 702.5,291.5 707.0,291.5 709.4,290.3 712.2,291.5 716.7,291.5 719.8,287.3 722.5,288.3 725.7,287.3 731.3,291.5 741.1,291.5 745.3,287.6 751.8,292.9 755.5,289.2 759.2,287.6 762.7,290.3 766.2,289.2 769.7,289.2 773.9,292.0 779.4,292.9 783.3,290.3 786.4,290.3 788.9,292.9 793.4,290.3 797.6,291.5 802.5,290.6 806.0,291.5 808.7,290.6 812.2,291.5 815.7,290.6 818.5,291.5 822.0,290.6 825.5,291.5 828.3,291.5" fill="none" stroke="#1a7fc0" stroke-width="1.25" stroke-linejoin="round"/></g>
<g clip-path="url(#c03)"><polygon points="833.0,293.6 859.0,293.6 860.0,293.1 863.0,287.1 866.0,293.1 868.8,291.3 872.0,292.9 875.2,292.9 878.5,292.3 881.8,292.3 885.0,292.9 888.2,292.3 891.5,292.3 894.8,292.9 898.0,291.3 901.2,292.9 904.5,291.3 907.8,292.9 911.0,292.3 914.2,292.9 917.5,292.9 920.8,292.9 924.0,292.9 927.2,292.9 930.5,292.3 933.8,292.9 937.0,292.9 940.2,292.3 943.5,292.3 946.8,292.9 950.0,291.3 953.2,292.9 956.5,292.9 959.8,292.9 963.0,292.9 965.0,293.1 968.0,288.1 971.0,293.1 972.8,291.3 976.0,292.9 979.2,292.9 982.5,292.3 985.8,292.3 989.0,292.3 992.2,292.9 995.5,291.3 998.8,292.9 1002.0,292.3 1005.2,292.9 1008.5,291.3 1011.8,291.3 1015.0,292.9 1018.2,292.9 1021.5,292.9 1024.8,292.9 1028.0,292.9 1028.0,294 833.0,294" fill="#117dbb" fill-opacity="0.07"/><polyline points="833.0,293.6 859.0,293.6 860.0,293.1 863.0,287.1 866.0,293.1 868.8,291.3 872.0,292.9 875.2,292.9 878.5,292.3 881.8,292.3 885.0,292.9 888.2,292.3 891.5,292.3 894.8,292.9 898.0,291.3 901.2,292.9 904.5,291.3 907.8,292.9 911.0,292.3 914.2,292.9 917.5,292.9 920.8,292.9 924.0,292.9 927.2,292.9 930.5,292.3 933.8,292.9 937.0,292.9 940.2,292.3 943.5,292.3 946.8,292.9 950.0,291.3 953.2,292.9 956.5,292.9 959.8,292.9 963.0,292.9 965.0,293.1 968.0,288.1 971.0,293.1 972.8,291.3 976.0,292.9 979.2,292.9 982.5,292.3 985.8,292.3 989.0,292.3 992.2,292.9 995.5,291.3 998.8,292.9 1002.0,292.3 1005.2,292.9 1008.5,291.3 1011.8,291.3 1015.0,292.9 1018.2,292.9 1021.5,292.9 1024.8,292.9 1028.0,292.9" fill="none" stroke="#1a7fc0" stroke-width="1.25" stroke-linejoin="round"/></g>
<g clip-path="url(#c04)"><polygon points="1058.3,292.6 1065.6,248.7 1068.4,283.6 1071.4,262.6 1075.3,281.5 1078.1,277.6 1081.6,275.2 1088.3,275.2 1091.4,272.4 1094.9,274.5 1101.1,280.8 1104.6,286.8 1108.1,283.6 1111.6,277.3 1114.4,275.9 1117.6,262.6 1121.4,260.3 1124.6,228.5 1127.6,264.3 1131.1,265.4 1134.3,265.4 1137.4,248.7 1141.3,259.4 1144.4,240.7 1150.6,268.2 1154.4,252.9 1157.3,219.8 1160.4,251.5 1164.3,231.5 1167.8,253.6 1173.4,272.4 1177.1,268.2 1180.3,268.2 1183.4,281.5 1187.6,274.5 1190.4,260.6 1196.7,270.3 1200.4,224.3 1203.4,257.5 1206.4,260.6 1212.7,269.6 1216.2,272.4 1219.4,266.4 1223.2,272.4 1226.6,281.5 1226.6,294 1058.3,294" fill="#117dbb" fill-opacity="0.07"/><polyline points="1058.3,292.6 1065.6,248.7 1068.4,283.6 1071.4,262.6 1075.3,281.5 1078.1,277.6 1081.6,275.2 1088.3,275.2 1091.4,272.4 1094.9,274.5 1101.1,280.8 1104.6,286.8 1108.1,283.6 1111.6,277.3 1114.4,275.9 1117.6,262.6 1121.4,260.3 1124.6,228.5 1127.6,264.3 1131.1,265.4 1134.3,265.4 1137.4,248.7 1141.3,259.4 1144.4,240.7 1150.6,268.2 1154.4,252.9 1157.3,219.8 1160.4,251.5 1164.3,231.5 1167.8,253.6 1173.4,272.4 1177.1,268.2 1180.3,268.2 1183.4,281.5 1187.6,274.5 1190.4,260.6 1196.7,270.3 1200.4,224.3 1203.4,257.5 1206.4,260.6 1212.7,269.6 1216.2,272.4 1219.4,266.4 1223.2,272.4 1226.6,281.5" fill="none" stroke="#1a7fc0" stroke-width="1.25" stroke-linejoin="round"/></g>
<g clip-path="url(#c05)"><polygon points="1257.2,292.6 1261.4,216.6 1267.7,281.5 1271.6,279.4 1274.4,265.9 1277.7,272.4 1281.3,273.4 1284.4,269.6 1287.5,280.4 1290.7,275.6 1297.4,268.6 1300.9,277.6 1304.6,279.4 1307.4,269.6 1310.9,278.4 1314.4,281.2 1317.6,271.4 1320.7,275.2 1324.6,275.6 1327.6,282.2 1330.4,282.6 1337.4,287.3 1343.7,283.3 1347.2,285.4 1350.6,291.2 1353.4,285.9 1356.9,284.5 1360.8,288.4 1367.4,287.7 1370.2,288.7 1373.4,281.5 1376.4,289.6 1380.3,289.6 1383.4,208.2 1386.5,277.6 1390.4,283.1 1393.5,272.4 1396.7,287.3 1399.9,285.7 1403.2,285.4 1407.1,280.1 1409.9,281.8 1413.4,288.4 1416.9,284.3 1420.4,281.5 1426.0,273.8 1426.0,294 1257.2,294" fill="#117dbb" fill-opacity="0.07"/><polyline points="1257.2,292.6 1261.4,216.6 1267.7,281.5 1271.6,279.4 1274.4,265.9 1277.7,272.4 1281.3,273.4 1284.4,269.6 1287.5,280.4 1290.7,275.6 1297.4,268.6 1300.9,277.6 1304.6,279.4 1307.4,269.6 1310.9,278.4 1314.4,281.2 1317.6,271.4 1320.7,275.2 1324.6,275.6 1327.6,282.2 1330.4,282.6 1337.4,287.3 1343.7,283.3 1347.2,285.4 1350.6,291.2 1353.4,285.9 1356.9,284.5 1360.8,288.4 1367.4,287.7 1370.2,288.7 1373.4,281.5 1376.4,289.6 1380.3,289.6 1383.4,208.2 1386.5,277.6 1390.4,283.1 1393.5,272.4 1396.7,287.3 1399.9,285.7 1403.2,285.4 1407.1,280.1 1409.9,281.8 1413.4,288.4 1416.9,284.3 1420.4,281.5 1426.0,273.8" fill="none" stroke="#1a7fc0" stroke-width="1.25" stroke-linejoin="round"/></g>
<g clip-path="url(#c10)"><polygon points="261.3,445.1 265.5,407.5 268.5,405.3 271.5,439.6 274.5,421.7 279.4,428.0 284.7,431.5 288.5,426.6 291.7,435.4 297.6,423.8 301.7,427.3 304.5,435.4 307.6,435.7 311.8,431.5 317.4,434.3 320.6,417.2 324.3,419.2 327.5,411.7 330.7,431.5 335.2,428.4 338.7,427.3 342.2,427.3 344.7,425.9 347.5,416.4 353.3,439.8 357.2,428.0 360.3,412.6 363.4,428.4 367.3,424.8 373.1,435.0 380.1,438.4 386.5,430.4 390.7,436.4 396.9,423.8 399.6,436.8 403.5,420.6 406.6,431.5 409.4,425.6 416.1,435.4 419.2,436.4 422.4,432.2 426.6,430.1 429.3,433.6 429.3,446 261.3,446" fill="#117dbb" fill-opacity="0.07"/><polyline points="261.3,445.1 265.5,407.5 268.5,405.3 271.5,439.6 274.5,421.7 279.4,428.0 284.7,431.5 288.5,426.6 291.7,435.4 297.6,423.8 301.7,427.3 304.5,435.4 307.6,435.7 311.8,431.5 317.4,434.3 320.6,417.2 324.3,419.2 327.5,411.7 330.7,431.5 335.2,428.4 338.7,427.3 342.2,427.3 344.7,425.9 347.5,416.4 353.3,439.8 357.2,428.0 360.3,412.6 363.4,428.4 367.3,424.8 373.1,435.0 380.1,438.4 386.5,430.4 390.7,436.4 396.9,423.8 399.6,436.8 403.5,420.6 406.6,431.5 409.4,425.6 416.1,435.4 419.2,436.4 422.4,432.2 426.6,430.1 429.3,433.6" fill="none" stroke="#1a7fc0" stroke-width="1.25" stroke-linejoin="round"/></g>
<g clip-path="url(#c11)"><polygon points="434.0,445.6 460.0,445.6 460.5,445.1 463.5,443.6 466.5,445.1 469.8,445.1 473.0,445.1 476.2,445.1 479.5,445.1 482.8,445.1 486.0,445.1 489.2,445.1 492.5,445.1 493.0,445.1 496.0,443.6 499.0,445.1 502.2,445.1 505.5,445.1 508.8,445.1 512.0,445.1 515.2,445.1 518.5,445.1 521.8,445.1 523.0,445.1 526.0,443.6 529.0,445.1 531.5,445.1 534.8,445.1 538.0,445.1 541.2,445.1 544.5,445.1 547.8,445.1 551.0,445.1 554.2,445.1 557.5,445.1 560.8,445.1 564.0,445.1 566.0,445.1 569.0,442.6 572.0,445.1 573.8,445.1 577.0,445.1 580.2,445.1 583.5,445.1 586.8,445.1 590.0,445.1 593.2,445.1 596.5,445.1 599.8,445.1 603.0,445.1 606.2,445.1 609.5,445.1 612.8,445.1 616.0,445.1 619.2,445.1 622.5,445.1 625.8,445.1 629.0,445.1 629.0,446 434.0,446" fill="#117dbb" fill-opacity="0.07"/><polyline points="434.0,445.6 460.0,445.6 460.5,445.1 463.5,443.6 466.5,445.1 469.8,445.1 473.0,445.1 476.2,445.1 479.5,445.1 482.8,445.1 486.0,445.1 489.2,445.1 492.5,445.1 493.0,445.1 496.0,443.6 499.0,445.1 502.2,445.1 505.5,445.1 508.8,445.1 512.0,445.1 515.2,445.1 518.5,445.1 521.8,445.1 523.0,445.1 526.0,443.6 529.0,445.1 531.5,445.1 534.8,445.1 538.0,445.1 541.2,445.1 544.5,445.1 547.8,445.1 551.0,445.1 554.2,445.1 557.5,445.1 560.8,445.1 564.0,445.1 566.0,445.1 569.0,442.6 572.0,445.1 573.8,445.1 577.0,445.1 580.2,445.1 583.5,445.1 586.8,445.1 590.0,445.1 593.2,445.1 596.5,445.1 599.8,445.1 603.0,445.1 606.2,445.1 609.5,445.1 612.8,445.1 616.0,445.1 619.2,445.1 622.5,445.1 625.8,445.1 629.0,445.1" fill="none" stroke="#1a7fc0" stroke-width="1.25" stroke-linejoin="round"/></g>
<g clip-path="url(#c12)"><polygon points="659.3,444.9 663.5,433.4 669.3,444.9 673.9,440.3 676.7,441.3 680.9,441.3 683.7,440.3 686.5,440.3 689.7,443.5 696.7,435.7 700.0,441.0 706.0,443.5 709.5,440.3 716.2,442.4 719.5,436.6 722.7,437.1 726.5,433.8 730.1,441.0 733.2,442.7 736.3,441.3 742.3,441.3 745.5,435.7 752.5,444.5 759.4,435.7 762.8,442.1 766.0,440.3 769.5,441.3 775.0,444.1 779.0,444.1 785.1,440.3 788.7,442.4 795.7,439.6 798.8,443.5 802.7,440.3 805.7,442.4 808.8,441.3 815.2,443.5 820.0,443.5 822.2,442.4 828.0,443.5 828.0,446 659.3,446" fill="#117dbb" fill-opacity="0.07"/><polyline points="659.3,444.9 663.5,433.4 669.3,444.9 673.9,440.3 676.7,441.3 680.9,441.3 683.7,440.3 686.5,440.3 689.7,443.5 696.7,435.7 700.0,441.0 706.0,443.5 709.5,440.3 716.2,442.4 719.5,436.6 722.7,437.1 726.5,433.8 730.1,441.0 733.2,442.7 736.3,441.3 742.3,441.3 745.5,435.7 752.5,444.5 759.4,435.7 762.8,442.1 766.0,440.3 769.5,441.3 775.0,444.1 779.0,444.1 785.1,440.3 788.7,442.4 795.7,439.6 798.8,443.5 802.7,440.3 805.7,442.4 808.8,441.3 815.2,443.5 820.0,443.5 822.2,442.4 828.0,443.5" fill="none" stroke="#1a7fc0" stroke-width="1.25" stroke-linejoin="round"/></g>
<g clip-path="url(#c13)"><polygon points="833.0,445.6 859.0,445.6 860.0,445.1 863.0,443.6 866.0,445.1 868.8,445.1 872.0,445.1 875.2,445.1 878.5,445.1 881.8,445.1 885.0,445.1 888.2,445.1 891.5,445.1 892.0,445.1 895.0,443.6 898.0,445.1 901.2,445.1 904.5,445.1 907.8,445.1 911.0,445.1 914.2,445.1 917.5,445.1 920.8,445.1 924.0,445.1 927.2,445.1 930.5,445.1 933.8,445.1 937.0,445.1 940.2,445.1 943.5,445.1 946.8,445.1 950.0,445.1 953.2,445.1 956.5,445.1 959.8,445.1 963.0,445.1 964.0,445.1 967.0,443.6 970.0,445.1 972.8,445.1 976.0,445.1 979.2,445.1 982.5,445.1 985.8,445.1 989.0,445.1 992.2,445.1 995.5,445.1 998.8,445.1 1002.0,445.1 1005.2,445.1 1008.5,445.1 1011.8,445.1 1015.0,445.1 1018.2,445.1 1021.5,445.1 1024.8,445.1 1028.0,445.1 1028.0,446 833.0,446" fill="#117dbb" fill-opacity="0.07"/><polyline points="833.0,445.6 859.0,445.6 860.0,445.1 863.0,443.6 866.0,445.1 868.8,445.1 872.0,445.1 875.2,445.1 878.5,445.1 881.8,445.1 885.0,445.1 888.2,445.1 891.5,445.1 892.0,445.1 895.0,443.6 898.0,445.1 901.2,445.1 904.5,445.1 907.8,445.1 911.0,445.1 914.2,445.1 917.5,445.1 920.8,445.1 924.0,445.1 927.2,445.1 930.5,445.1 933.8,445.1 937.0,445.1 940.2,445.1 943.5,445.1 946.8,445.1 950.0,445.1 953.2,445.1 956.5,445.1 959.8,445.1 963.0,445.1 964.0,445.1 967.0,443.6 970.0,445.1 972.8,445.1 976.0,445.1 979.2,445.1 982.5,445.1 985.8,445.1 989.0,445.1 992.2,445.1 995.5,445.1 998.8,445.1 1002.0,445.1 1005.2,445.1 1008.5,445.1 1011.8,445.1 1015.0,445.1 1018.2,445.1 1021.5,445.1 1024.8,445.1 1028.0,445.1" fill="none" stroke="#1a7fc0" stroke-width="1.25" stroke-linejoin="round"/></g>
<g clip-path="url(#c14)"><polygon points="1058.6,444.9 1062.4,438.7 1065.6,375.6 1068.4,431.4 1071.4,417.4 1075.3,432.3 1078.5,421.6 1081.9,429.3 1085.5,427.6 1088.6,432.3 1091.4,421.6 1094.2,420.2 1098.3,428.1 1104.6,433.7 1108.4,428.6 1111.6,430.4 1114.8,435.5 1118.1,423.0 1121.4,405.5 1124.6,370.4 1127.6,417.4 1131.5,425.4 1134.6,416.0 1137.7,410.4 1141.3,417.4 1144.4,396.5 1147.4,406.9 1150.6,430.7 1154.4,398.3 1157.3,353.2 1160.4,421.6 1164.3,403.5 1167.8,419.2 1170.9,425.4 1173.9,426.7 1177.6,429.0 1180.3,420.6 1183.4,417.8 1187.3,427.2 1190.4,416.4 1196.7,430.4 1200.4,388.5 1203.4,412.2 1206.4,405.8 1210.6,420.6 1213.8,424.4 1216.9,427.2 1219.4,430.4 1222.7,429.5 1226.6,434.8 1226.6,446 1058.6,446" fill="#117dbb" fill-opacity="0.07"/><polyline points="1058.6,444.9 1062.4,438.7 1065.6,375.6 1068.4,431.4 1071.4,417.4 1075.3,432.3 1078.5,421.6 1081.9,429.3 1085.5,427.6 1088.6,432.3 1091.4,421.6 1094.2,420.2 1098.3,428.1 1104.6,433.7 1108.4,428.6 1111.6,430.4 1114.8,435.5 1118.1,423.0 1121.4,405.5 1124.6,370.4 1127.6,417.4 1131.5,425.4 1134.6,416.0 1137.7,410.4 1141.3,417.4 1144.4,396.5 1147.4,406.9 1150.6,430.7 1154.4,398.3 1157.3,353.2 1160.4,421.6 1164.3,403.5 1167.8,419.2 1170.9,425.4 1173.9,426.7 1177.6,429.0 1180.3,420.6 1183.4,417.8 1187.3,427.2 1190.4,416.4 1196.7,430.4 1200.4,388.5 1203.4,412.2 1206.4,405.8 1210.6,420.6 1213.8,424.4 1216.9,427.2 1219.4,430.4 1222.7,429.5 1226.6,434.8" fill="none" stroke="#1a7fc0" stroke-width="1.25" stroke-linejoin="round"/></g>
<g clip-path="url(#c15)"><polygon points="1257.2,444.9 1261.4,352.6 1264.6,411.4 1267.4,416.4 1271.1,413.6 1274.4,412.2 1278.1,412.2 1281.6,413.6 1284.4,408.6 1287.5,415.6 1290.7,409.7 1294.4,406.7 1297.6,409.7 1300.9,418.4 1307.4,416.0 1310.6,414.2 1314.4,409.0 1317.6,395.5 1320.7,413.9 1327.6,429.5 1330.4,389.1 1333.5,425.4 1337.7,431.4 1340.5,420.6 1347.4,434.6 1350.6,434.6 1353.4,432.3 1357.2,434.6 1360.8,431.4 1363.9,432.3 1367.8,430.4 1370.9,431.4 1376.4,435.5 1383.4,431.4 1386.5,433.4 1390.4,427.9 1393.5,396.5 1396.7,433.4 1400.4,425.4 1403.6,429.3 1409.2,427.6 1416.2,431.4 1419.4,423.7 1423.2,430.4 1426.6,425.4 1426.6,446 1257.2,446" fill="#117dbb" fill-opacity="0.07"/><polyline points="1257.2,444.9 1261.4,352.6 1264.6,411.4 1267.4,416.4 1271.1,413.6 1274.4,412.2 1278.1,412.2 1281.6,413.6 1284.4,408.6 1287.5,415.6 1290.7,409.7 1294.4,406.7 1297.6,409.7 1300.9,418.4 1307.4,416.0 1310.6,414.2 1314.4,409.0 1317.6,395.5 1320.7,413.9 1327.6,429.5 1330.4,389.1 1333.5,425.4 1337.7,431.4 1340.5,420.6 1347.4,434.6 1350.6,434.6 1353.4,432.3 1357.2,434.6 1360.8,431.4 1363.9,432.3 1367.8,430.4 1370.9,431.4 1376.4,435.5 1383.4,431.4 1386.5,433.4 1390.4,427.9 1393.5,396.5 1396.7,433.4 1400.4,425.4 1403.6,429.3 1409.2,427.6 1416.2,431.4 1419.4,423.7 1423.2,430.4 1426.6,425.4" fill="none" stroke="#1a7fc0" stroke-width="1.25" stroke-linejoin="round"/></g>
<g clip-path="url(#c20)"><polygon points="235.0,596.6 261.0,596.6 262.0,596.1 265.0,594.6 268.0,596.1 270.8,596.1 274.0,596.1 277.2,596.1 280.5,596.1 283.8,596.1 287.0,596.1 290.2,596.1 293.0,596.1 296.0,594.9 299.0,596.1 300.0,596.1 303.2,596.1 306.5,596.1 309.8,596.1 313.0,596.1 316.2,596.1 317.6,596.1 320.6,594.9 323.6,596.1 326.0,596.1 329.2,596.1 332.5,596.1 335.8,596.1 339.0,596.1 342.2,596.1 345.5,596.1 348.8,596.1 352.0,596.1 355.2,596.1 358.5,596.1 361.8,596.1 365.0,596.1 366.7,596.1 369.7,594.1 372.7,596.1 374.8,596.1 378.0,596.1 380.0,596.1 383.0,594.9 386.0,596.1 387.8,596.1 391.0,596.1 394.2,596.1 397.5,596.1 400.8,596.1 404.0,596.1 407.2,596.1 410.5,596.1 413.8,596.1 417.0,596.1 420.2,596.1 423.5,596.1 426.8,596.1 430.0,596.1 430.0,597 235.0,597" fill="#117dbb" fill-opacity="0.07"/><polyline points="235.0,596.6 261.0,596.6 262.0,596.1 265.0,594.6 268.0,596.1 270.8,596.1 274.0,596.1 277.2,596.1 280.5,596.1 283.8,596.1 287.0,596.1 290.2,596.1 293.0,596.1 296.0,594.9 299.0,596.1 300.0,596.1 303.2,596.1 306.5,596.1 309.8,596.1 313.0,596.1 316.2,596.1 317.6,596.1 320.6,594.9 323.6,596.1 326.0,596.1 329.2,596.1 332.5,596.1 335.8,596.1 339.0,596.1 342.2,596.1 345.5,596.1 348.8,596.1 352.0,596.1 355.2,596.1 358.5,596.1 361.8,596.1 365.0,596.1 366.7,596.1 369.7,594.1 372.7,596.1 374.8,596.1 378.0,596.1 380.0,596.1 383.0,594.9 386.0,596.1 387.8,596.1 391.0,596.1 394.2,596.1 397.5,596.1 400.8,596.1 404.0,596.1 407.2,596.1 410.5,596.1 413.8,596.1 417.0,596.1 420.2,596.1 423.5,596.1 426.8,596.1 430.0,596.1" fill="none" stroke="#1a7fc0" stroke-width="1.25" stroke-linejoin="round"/></g>
<g clip-path="url(#c21)"><polygon points="434.0,596.6 460.0,596.6 460.5,596.1 463.5,594.6 466.5,596.1 469.8,596.1 473.0,596.1 476.2,596.1 479.5,596.1 482.8,596.1 486.0,596.1 489.2,596.1 492.5,596.1 495.8,596.1 499.0,596.1 502.2,596.1 505.5,596.1 508.8,596.1 512.0,596.1 515.2,596.1 518.5,596.1 521.8,596.1 525.0,596.1 528.2,596.1 531.5,596.1 534.8,596.1 538.0,596.1 541.2,596.1 544.5,596.1 547.8,596.1 551.0,596.1 554.2,596.1 557.5,596.1 560.8,596.1 564.0,596.1 565.0,596.1 568.0,594.9 571.0,596.1 573.8,596.1 577.0,596.1 580.2,596.1 583.5,596.1 586.8,596.1 590.0,596.1 593.2,596.1 596.5,596.1 599.8,596.1 603.0,596.1 606.2,596.1 609.5,596.1 612.8,596.1 616.0,596.1 619.2,596.1 622.5,596.1 625.8,596.1 629.0,596.1 629.0,597 434.0,597" fill="#117dbb" fill-opacity="0.07"/><polyline points="434.0,596.6 460.0,596.6 460.5,596.1 463.5,594.6 466.5,596.1 469.8,596.1 473.0,596.1 476.2,596.1 479.5,596.1 482.8,596.1 486.0,596.1 489.2,596.1 492.5,596.1 495.8,596.1 499.0,596.1 502.2,596.1 505.5,596.1 508.8,596.1 512.0,596.1 515.2,596.1 518.5,596.1 521.8,596.1 525.0,596.1 528.2,596.1 531.5,596.1 534.8,596.1 538.0,596.1 541.2,596.1 544.5,596.1 547.8,596.1 551.0,596.1 554.2,596.1 557.5,596.1 560.8,596.1 564.0,596.1 565.0,596.1 568.0,594.9 571.0,596.1 573.8,596.1 577.0,596.1 580.2,596.1 583.5,596.1 586.8,596.1 590.0,596.1 593.2,596.1 596.5,596.1 599.8,596.1 603.0,596.1 606.2,596.1 609.5,596.1 612.8,596.1 616.0,596.1 619.2,596.1 622.5,596.1 625.8,596.1 629.0,596.1" fill="none" stroke="#1a7fc0" stroke-width="1.25" stroke-linejoin="round"/></g>
<g clip-path="url(#c22)"><polygon points="633.0,595.8 660.0,595.8 662.0,594.0 664.0,595.8 690.0,595.8 692.0,594.5 694.0,595.8 696.0,594.5 698.0,595.8 724.0,595.8 726.0,594.5 728.0,595.8 735.2,595.8 739.4,517.1 742.0,570.7 745.6,595.8 752.6,595.8 756.5,583.9 759.6,564.5 762.2,452.0 765.3,451.5 769.6,488.4 772.4,595.8 774.0,594.8 776.0,595.8 828.0,595.8 828.0,597 633.0,597" fill="#117dbb" fill-opacity="0.07"/><polyline points="633.0,595.8 660.0,595.8 662.0,594.0 664.0,595.8 690.0,595.8 692.0,594.5 694.0,595.8 696.0,594.5 698.0,595.8 724.0,595.8 726.0,594.5 728.0,595.8 735.2,595.8 739.4,517.1 742.0,570.7 745.6,595.8 752.6,595.8 756.5,583.9 759.6,564.5 762.2,452.0 765.3,451.5 769.6,488.4 772.4,595.8 774.0,594.8 776.0,595.8 828.0,595.8" fill="none" stroke="#1a7fc0" stroke-width="1.25" stroke-linejoin="round"/></g>
<g clip-path="url(#c23)"><polygon points="833.0,596.6 859.0,596.6 861.0,596.1 864.0,594.6 867.0,596.1 868.8,596.1 872.0,596.1 875.2,596.1 878.5,596.1 881.8,596.1 885.0,596.1 888.2,596.1 891.5,596.1 894.8,596.1 898.0,596.1 901.2,596.1 904.5,596.1 907.8,596.1 911.0,596.1 914.2,596.1 917.5,596.1 920.8,596.1 924.0,596.1 927.2,596.1 930.5,596.1 933.8,596.1 937.0,596.1 940.2,596.1 943.5,596.1 946.8,596.1 950.0,596.1 953.2,596.1 956.5,596.1 959.8,596.1 963.0,596.1 966.2,596.1 969.5,596.1 972.8,596.1 976.0,596.1 979.2,596.1 982.5,596.1 985.8,596.1 989.0,596.1 992.2,596.1 995.5,596.1 998.8,596.1 1002.0,596.1 1005.2,596.1 1008.5,596.1 1011.8,596.1 1015.0,596.1 1018.2,596.1 1021.5,596.1 1024.8,596.1 1028.0,596.1 1028.0,597 833.0,597" fill="#117dbb" fill-opacity="0.07"/><polyline points="833.0,596.6 859.0,596.6 861.0,596.1 864.0,594.6 867.0,596.1 868.8,596.1 872.0,596.1 875.2,596.1 878.5,596.1 881.8,596.1 885.0,596.1 888.2,596.1 891.5,596.1 894.8,596.1 898.0,596.1 901.2,596.1 904.5,596.1 907.8,596.1 911.0,596.1 914.2,596.1 917.5,596.1 920.8,596.1 924.0,596.1 927.2,596.1 930.5,596.1 933.8,596.1 937.0,596.1 940.2,596.1 943.5,596.1 946.8,596.1 950.0,596.1 953.2,596.1 956.5,596.1 959.8,596.1 963.0,596.1 966.2,596.1 969.5,596.1 972.8,596.1 976.0,596.1 979.2,596.1 982.5,596.1 985.8,596.1 989.0,596.1 992.2,596.1 995.5,596.1 998.8,596.1 1002.0,596.1 1005.2,596.1 1008.5,596.1 1011.8,596.1 1015.0,596.1 1018.2,596.1 1021.5,596.1 1024.8,596.1 1028.0,596.1" fill="none" stroke="#1a7fc0" stroke-width="1.25" stroke-linejoin="round"/></g>
<g clip-path="url(#c24)"><polygon points="1032.0,596.6 1058.0,596.6 1061.2,596.1 1064.5,596.1 1067.8,596.1 1071.0,596.1 1074.2,596.1 1077.5,596.1 1080.8,596.1 1084.0,596.1 1087.2,596.1 1090.5,596.1 1093.8,596.1 1097.0,596.1 1100.2,596.1 1103.5,596.1 1106.8,596.1 1110.0,596.1 1113.2,596.1 1116.5,596.1 1119.8,596.1 1123.0,596.1 1126.2,596.1 1129.5,596.1 1132.8,596.1 1136.0,596.1 1139.2,596.1 1142.5,596.1 1145.8,596.1 1149.0,596.1 1152.2,596.1 1155.5,596.1 1158.8,596.1 1162.0,596.1 1165.2,596.1 1168.5,596.1 1171.8,596.1 1175.0,596.1 1178.2,596.1 1181.5,596.1 1184.8,596.1 1188.0,596.1 1191.2,596.1 1194.5,596.1 1197.8,596.1 1201.0,596.1 1204.2,596.1 1207.5,596.1 1210.8,596.1 1214.0,596.1 1217.2,596.1 1220.5,596.1 1223.8,596.1 1227.0,596.1 1227.0,597 1032.0,597" fill="#117dbb" fill-opacity="0.07"/><polyline points="1032.0,596.6 1058.0,596.6 1061.2,596.1 1064.5,596.1 1067.8,596.1 1071.0,596.1 1074.2,596.1 1077.5,596.1 1080.8,596.1 1084.0,596.1 1087.2,596.1 1090.5,596.1 1093.8,596.1 1097.0,596.1 1100.2,596.1 1103.5,596.1 1106.8,596.1 1110.0,596.1 1113.2,596.1 1116.5,596.1 1119.8,596.1 1123.0,596.1 1126.2,596.1 1129.5,596.1 1132.8,596.1 1136.0,596.1 1139.2,596.1 1142.5,596.1 1145.8,596.1 1149.0,596.1 1152.2,596.1 1155.5,596.1 1158.8,596.1 1162.0,596.1 1165.2,596.1 1168.5,596.1 1171.8,596.1 1175.0,596.1 1178.2,596.1 1181.5,596.1 1184.8,596.1 1188.0,596.1 1191.2,596.1 1194.5,596.1 1197.8,596.1 1201.0,596.1 1204.2,596.1 1207.5,596.1 1210.8,596.1 1214.0,596.1 1217.2,596.1 1220.5,596.1 1223.8,596.1 1227.0,596.1" fill="none" stroke="#1a7fc0" stroke-width="1.25" stroke-linejoin="round"/></g>
<g clip-path="url(#c25)"><polygon points="1231.0,596.6 1257.0,596.6 1260.2,596.1 1263.5,596.1 1266.8,596.1 1270.0,596.1 1273.2,596.1 1276.5,596.1 1279.8,596.1 1283.0,596.1 1286.2,596.1 1289.5,596.1 1292.8,596.1 1296.0,596.1 1299.2,596.1 1302.5,596.1 1305.8,596.1 1309.0,596.1 1312.2,596.1 1315.5,596.1 1318.8,596.1 1322.0,596.1 1325.2,596.1 1328.5,596.1 1331.8,596.1 1335.0,596.1 1338.2,596.1 1341.5,596.1 1344.8,596.1 1348.0,596.1 1351.2,596.1 1354.5,596.1 1357.8,596.1 1361.0,596.1 1364.2,596.1 1367.5,596.1 1370.8,596.1 1374.0,596.1 1377.2,596.1 1380.5,596.1 1383.8,596.1 1387.0,596.1 1390.2,596.1 1393.5,596.1 1396.8,596.1 1400.0,596.1 1403.2,596.1 1406.5,596.1 1409.8,596.1 1413.0,596.1 1416.2,596.1 1419.5,596.1 1422.8,596.1 1426.0,596.1 1426.0,597 1231.0,597" fill="#117dbb" fill-opacity="0.07"/><polyline points="1231.0,596.6 1257.0,596.6 1260.2,596.1 1263.5,596.1 1266.8,596.1 1270.0,596.1 1273.2,596.1 1276.5,596.1 1279.8,596.1 1283.0,596.1 1286.2,596.1 1289.5,596.1 1292.8,596.1 1296.0,596.1 1299.2,596.1 1302.5,596.1 1305.8,596.1 1309.0,596.1 1312.2,596.1 1315.5,596.1 1318.8,596.1 1322.0,596.1 1325.2,596.1 1328.5,596.1 1331.8,596.1 1335.0,596.1 1338.2,596.1 1341.5,596.1 1344.8,596.1 1348.0,596.1 1351.2,596.1 1354.5,596.1 1357.8,596.1 1361.0,596.1 1364.2,596.1 1367.5,596.1 1370.8,596.1 1374.0,596.1 1377.2,596.1 1380.5,596.1 1383.8,596.1 1387.0,596.1 1390.2,596.1 1393.5,596.1 1396.8,596.1 1400.0,596.1 1403.2,596.1 1406.5,596.1 1409.8,596.1 1413.0,596.1 1416.2,596.1 1419.5,596.1 1422.8,596.1 1426.0,596.1" fill="none" stroke="#1a7fc0" stroke-width="1.25" stroke-linejoin="round"/></g>
<g clip-path="url(#c30)"><polygon points="235.0,748.6 261.0,748.6 262.0,748.1 265.0,746.6 268.0,748.1 270.8,748.1 274.0,748.1 277.2,748.1 280.5,748.1 283.8,748.1 287.0,748.1 290.2,748.1 293.5,748.1 294.0,748.1 297.0,746.9 300.0,748.1 303.2,748.1 306.5,748.1 309.8,748.1 313.0,748.1 316.2,748.1 317.6,748.1 320.6,746.9 323.6,748.1 324.0,748.1 327.0,746.9 330.0,748.1 332.5,748.1 335.8,748.1 339.0,748.1 342.2,748.1 345.5,748.1 348.8,748.1 352.0,748.1 355.2,748.1 358.5,748.1 361.8,748.1 365.0,748.1 366.7,748.1 369.7,746.1 372.7,748.1 374.8,748.1 378.0,748.1 380.0,748.1 383.0,746.9 386.0,748.1 387.8,748.1 391.0,748.1 394.2,748.1 397.5,748.1 400.8,748.1 404.0,748.1 407.2,748.1 410.5,748.1 413.8,748.1 417.0,748.1 420.2,748.1 423.5,748.1 426.8,748.1 430.0,748.1 430.0,749 235.0,749" fill="#117dbb" fill-opacity="0.07"/><polyline points="235.0,748.6 261.0,748.6 262.0,748.1 265.0,746.6 268.0,748.1 270.8,748.1 274.0,748.1 277.2,748.1 280.5,748.1 283.8,748.1 287.0,748.1 290.2,748.1 293.5,748.1 294.0,748.1 297.0,746.9 300.0,748.1 303.2,748.1 306.5,748.1 309.8,748.1 313.0,748.1 316.2,748.1 317.6,748.1 320.6,746.9 323.6,748.1 324.0,748.1 327.0,746.9 330.0,748.1 332.5,748.1 335.8,748.1 339.0,748.1 342.2,748.1 345.5,748.1 348.8,748.1 352.0,748.1 355.2,748.1 358.5,748.1 361.8,748.1 365.0,748.1 366.7,748.1 369.7,746.1 372.7,748.1 374.8,748.1 378.0,748.1 380.0,748.1 383.0,746.9 386.0,748.1 387.8,748.1 391.0,748.1 394.2,748.1 397.5,748.1 400.8,748.1 404.0,748.1 407.2,748.1 410.5,748.1 413.8,748.1 417.0,748.1 420.2,748.1 423.5,748.1 426.8,748.1 430.0,748.1" fill="none" stroke="#1a7fc0" stroke-width="1.25" stroke-linejoin="round"/></g>
<g clip-path="url(#c31)"><polygon points="434.0,748.6 460.0,748.6 460.5,748.1 463.5,746.6 466.5,748.1 469.8,748.1 473.0,748.1 476.2,748.1 479.5,748.1 482.8,748.1 486.0,748.1 489.2,748.1 492.5,748.1 494.0,748.1 497.0,746.9 500.0,748.1 502.2,748.1 505.5,748.1 508.8,748.1 512.0,748.1 515.2,748.1 518.5,748.1 521.8,748.1 525.0,748.1 528.2,748.1 531.5,748.1 534.8,748.1 538.0,748.1 541.2,748.1 544.5,748.1 547.8,748.1 551.0,748.1 554.2,748.1 557.5,748.1 560.8,748.1 564.0,748.1 565.0,748.1 568.0,746.6 571.0,748.1 573.8,748.1 577.0,748.1 579.7,748.1 582.7,746.9 585.7,748.1 586.8,748.1 590.0,748.1 593.2,748.1 596.5,748.1 599.8,748.1 603.0,748.1 606.2,748.1 609.5,748.1 612.8,748.1 616.0,748.1 619.2,748.1 622.5,748.1 625.8,748.1 629.0,748.1 629.0,749 434.0,749" fill="#117dbb" fill-opacity="0.07"/><polyline points="434.0,748.6 460.0,748.6 460.5,748.1 463.5,746.6 466.5,748.1 469.8,748.1 473.0,748.1 476.2,748.1 479.5,748.1 482.8,748.1 486.0,748.1 489.2,748.1 492.5,748.1 494.0,748.1 497.0,746.9 500.0,748.1 502.2,748.1 505.5,748.1 508.8,748.1 512.0,748.1 515.2,748.1 518.5,748.1 521.8,748.1 525.0,748.1 528.2,748.1 531.5,748.1 534.8,748.1 538.0,748.1 541.2,748.1 544.5,748.1 547.8,748.1 551.0,748.1 554.2,748.1 557.5,748.1 560.8,748.1 564.0,748.1 565.0,748.1 568.0,746.6 571.0,748.1 573.8,748.1 577.0,748.1 579.7,748.1 582.7,746.9 585.7,748.1 586.8,748.1 590.0,748.1 593.2,748.1 596.5,748.1 599.8,748.1 603.0,748.1 606.2,748.1 609.5,748.1 612.8,748.1 616.0,748.1 619.2,748.1 622.5,748.1 625.8,748.1 629.0,748.1" fill="none" stroke="#1a7fc0" stroke-width="1.25" stroke-linejoin="round"/></g>
<g clip-path="url(#c32)"><polygon points="633.0,748.6 659.0,748.1 662.0,746.6 665.0,748.1 665.5,748.1 668.8,748.1 672.0,748.1 675.2,748.1 678.5,748.1 681.8,748.1 685.0,748.1 688.2,748.1 691.0,748.1 694.0,746.9 697.0,748.1 698.0,748.1 701.2,748.1 704.5,748.1 707.8,748.1 711.0,748.1 714.2,748.1 717.0,748.1 720.0,746.6 723.0,748.1 724.0,748.1 727.2,748.1 730.5,748.1 733.8,748.1 737.0,748.1 740.2,748.1 742.6,748.1 745.6,746.9 748.6,748.1 750.0,748.1 753.2,748.1 756.5,748.1 759.8,748.1 763.0,748.1 764.0,748.1 767.0,746.9 770.0,748.1 772.8,748.1 776.0,748.1 779.2,748.1 779.7,748.1 782.7,746.9 785.7,748.1 789.0,748.1 792.2,748.1 795.5,748.1 798.8,748.1 802.0,748.1 805.2,748.1 808.5,748.1 811.8,748.1 815.0,748.1 818.2,748.1 821.5,748.1 824.8,748.1 828.0,748.1 828.0,749 633.0,749" fill="#117dbb" fill-opacity="0.07"/><polyline points="633.0,748.6 659.0,748.1 662.0,746.6 665.0,748.1 665.5,748.1 668.8,748.1 672.0,748.1 675.2,748.1 678.5,748.1 681.8,748.1 685.0,748.1 688.2,748.1 691.0,748.1 694.0,746.9 697.0,748.1 698.0,748.1 701.2,748.1 704.5,748.1 707.8,748.1 711.0,748.1 714.2,748.1 717.0,748.1 720.0,746.6 723.0,748.1 724.0,748.1 727.2,748.1 730.5,748.1 733.8,748.1 737.0,748.1 740.2,748.1 742.6,748.1 745.6,746.9 748.6,748.1 750.0,748.1 753.2,748.1 756.5,748.1 759.8,748.1 763.0,748.1 764.0,748.1 767.0,746.9 770.0,748.1 772.8,748.1 776.0,748.1 779.2,748.1 779.7,748.1 782.7,746.9 785.7,748.1 789.0,748.1 792.2,748.1 795.5,748.1 798.8,748.1 802.0,748.1 805.2,748.1 808.5,748.1 811.8,748.1 815.0,748.1 818.2,748.1 821.5,748.1 824.8,748.1 828.0,748.1" fill="none" stroke="#1a7fc0" stroke-width="1.25" stroke-linejoin="round"/></g>
<g clip-path="url(#c33)"><polygon points="833.0,748.6 859.0,748.6 862.2,748.1 865.5,748.1 868.8,748.1 872.0,748.1 875.2,748.1 878.5,748.1 881.8,748.1 885.0,748.1 888.2,748.1 891.5,748.1 894.8,748.1 898.0,748.1 901.2,748.1 904.5,748.1 907.8,748.1 911.0,748.1 914.2,748.1 917.5,748.1 920.8,748.1 924.0,748.1 927.2,748.1 930.5,748.1 933.8,748.1 937.0,748.1 940.2,748.1 943.5,748.1 946.8,748.1 950.0,748.1 953.2,748.1 956.5,748.1 959.8,748.1 963.0,748.1 966.2,748.1 969.5,748.1 972.8,748.1 976.0,748.1 979.2,748.1 982.5,748.1 985.8,748.1 989.0,748.1 992.2,748.1 995.5,748.1 998.8,748.1 1002.0,748.1 1005.2,748.1 1008.5,748.1 1011.8,748.1 1015.0,748.1 1018.2,748.1 1021.5,748.1 1024.8,748.1 1028.0,748.1 1028.0,749 833.0,749" fill="#117dbb" fill-opacity="0.07"/><polyline points="833.0,748.6 859.0,748.6 862.2,748.1 865.5,748.1 868.8,748.1 872.0,748.1 875.2,748.1 878.5,748.1 881.8,748.1 885.0,748.1 888.2,748.1 891.5,748.1 894.8,748.1 898.0,748.1 901.2,748.1 904.5,748.1 907.8,748.1 911.0,748.1 914.2,748.1 917.5,748.1 920.8,748.1 924.0,748.1 927.2,748.1 930.5,748.1 933.8,748.1 937.0,748.1 940.2,748.1 943.5,748.1 946.8,748.1 950.0,748.1 953.2,748.1 956.5,748.1 959.8,748.1 963.0,748.1 966.2,748.1 969.5,748.1 972.8,748.1 976.0,748.1 979.2,748.1 982.5,748.1 985.8,748.1 989.0,748.1 992.2,748.1 995.5,748.1 998.8,748.1 1002.0,748.1 1005.2,748.1 1008.5,748.1 1011.8,748.1 1015.0,748.1 1018.2,748.1 1021.5,748.1 1024.8,748.1 1028.0,748.1" fill="none" stroke="#1a7fc0" stroke-width="1.25" stroke-linejoin="round"/></g>
<g clip-path="url(#c34)"><polygon points="1032.0,748.6 1058.0,748.6 1061.2,748.1 1064.5,748.1 1067.8,748.1 1071.0,748.1 1074.2,748.1 1077.5,748.1 1080.8,748.1 1084.0,748.1 1087.2,748.1 1090.5,748.1 1093.8,748.1 1097.0,748.1 1100.2,748.1 1103.5,748.1 1106.8,748.1 1110.0,748.1 1113.2,748.1 1116.5,748.1 1119.8,748.1 1123.0,748.1 1126.2,748.1 1129.5,748.1 1132.8,748.1 1136.0,748.1 1139.2,748.1 1142.5,748.1 1145.8,748.1 1149.0,748.1 1152.2,748.1 1155.5,748.1 1158.8,748.1 1162.0,748.1 1165.2,748.1 1168.5,748.1 1171.8,748.1 1175.0,748.1 1178.2,748.1 1181.5,748.1 1184.8,748.1 1188.0,748.1 1191.2,748.1 1194.5,748.1 1197.8,748.1 1201.0,748.1 1204.2,748.1 1207.5,748.1 1210.8,748.1 1214.0,748.1 1217.2,748.1 1220.5,748.1 1223.8,748.1 1227.0,748.1 1227.0,749 1032.0,749" fill="#117dbb" fill-opacity="0.07"/><polyline points="1032.0,748.6 1058.0,748.6 1061.2,748.1 1064.5,748.1 1067.8,748.1 1071.0,748.1 1074.2,748.1 1077.5,748.1 1080.8,748.1 1084.0,748.1 1087.2,748.1 1090.5,748.1 1093.8,748.1 1097.0,748.1 1100.2,748.1 1103.5,748.1 1106.8,748.1 1110.0,748.1 1113.2,748.1 1116.5,748.1 1119.8,748.1 1123.0,748.1 1126.2,748.1 1129.5,748.1 1132.8,748.1 1136.0,748.1 1139.2,748.1 1142.5,748.1 1145.8,748.1 1149.0,748.1 1152.2,748.1 1155.5,748.1 1158.8,748.1 1162.0,748.1 1165.2,748.1 1168.5,748.1 1171.8,748.1 1175.0,748.1 1178.2,748.1 1181.5,748.1 1184.8,748.1 1188.0,748.1 1191.2,748.1 1194.5,748.1 1197.8,748.1 1201.0,748.1 1204.2,748.1 1207.5,748.1 1210.8,748.1 1214.0,748.1 1217.2,748.1 1220.5,748.1 1223.8,748.1 1227.0,748.1" fill="none" stroke="#1a7fc0" stroke-width="1.25" stroke-linejoin="round"/></g>
<g clip-path="url(#c35)"><polygon points="1231.0,748.6 1257.0,748.6 1260.2,748.1 1263.5,748.1 1266.8,748.1 1270.0,748.1 1273.2,748.1 1276.5,748.1 1279.8,748.1 1283.0,748.1 1286.2,748.1 1289.5,748.1 1292.8,748.1 1296.0,748.1 1299.2,748.1 1302.5,748.1 1305.8,748.1 1309.0,748.1 1312.2,748.1 1315.5,748.1 1318.8,748.1 1322.0,748.1 1325.2,748.1 1328.5,748.1 1331.8,748.1 1335.0,748.1 1338.2,748.1 1341.5,748.1 1344.8,748.1 1348.0,748.1 1351.2,748.1 1354.5,748.1 1357.8,748.1 1361.0,748.1 1364.2,748.1 1367.5,748.1 1370.8,748.1 1374.0,748.1 1377.2,748.1 1380.5,748.1 1383.8,748.1 1387.0,748.1 1390.2,748.1 1393.5,748.1 1396.8,748.1 1400.0,748.1 1403.2,748.1 1406.5,748.1 1409.8,748.1 1413.0,748.1 1416.2,748.1 1419.5,748.1 1422.8,748.1 1426.0,748.1 1426.0,749 1231.0,749" fill="#117dbb" fill-opacity="0.07"/><polyline points="1231.0,748.6 1257.0,748.6 1260.2,748.1 1263.5,748.1 1266.8,748.1 1270.0,748.1 1273.2,748.1 1276.5,748.1 1279.8,748.1 1283.0,748.1 1286.2,748.1 1289.5,748.1 1292.8,748.1 1296.0,748.1 1299.2,748.1 1302.5,748.1 1305.8,748.1 1309.0,748.1 1312.2,748.1 1315.5,748.1 1318.8,748.1 1322.0,748.1 1325.2,748.1 1328.5,748.1 1331.8,748.1 1335.0,748.1 1338.2,748.1 1341.5,748.1 1344.8,748.1 1348.0,748.1 1351.2,748.1 1354.5,748.1 1357.8,748.1 1361.0,748.1 1364.2,748.1 1367.5,748.1 1370.8,748.1 1374.0,748.1 1377.2,748.1 1380.5,748.1 1383.8,748.1 1387.0,748.1 1390.2,748.1 1393.5,748.1 1396.8,748.1 1400.0,748.1 1403.2,748.1 1406.5,748.1 1409.8,748.1 1413.0,748.1 1416.2,748.1 1419.5,748.1 1422.8,748.1 1426.0,748.1" fill="none" stroke="#1a7fc0" stroke-width="1.25" stroke-linejoin="round"/></g>
<g shape-rendering="crispEdges" fill="none" stroke="#1c7fbe" stroke-width="1">
<rect x="235.5" y="147.5" width="194" height="146"/>
<rect x="434.5" y="147.5" width="194" height="146"/>
<rect x="633.5" y="147.5" width="195" height="146"/>
<rect x="833.5" y="147.5" width="194" height="146"/>
<rect x="1032.5" y="147.5" width="194" height="146"/>
<rect x="1231.5" y="147.5" width="195" height="146"/>
<rect x="235.5" y="298.5" width="194" height="147"/>
<rect x="434.5" y="298.5" width="194" height="147"/>
<rect x="633.5" y="298.5" width="195" height="147"/>
<rect x="833.5" y="298.5" width="194" height="147"/>
<rect x="1032.5" y="298.5" width="194" height="147"/>
<rect x="1231.5" y="298.5" width="195" height="147"/>
<rect x="235.5" y="450.5" width="194" height="146"/>
<rect x="434.5" y="450.5" width="194" height="146"/>
<rect x="633.5" y="450.5" width="195" height="146"/>
<rect x="833.5" y="450.5" width="194" height="146"/>
<rect x="1032.5" y="450.5" width="194" height="146"/>
<rect x="1231.5" y="450.5" width="195" height="146"/>
<rect x="235.5" y="601.5" width="194" height="147"/>
<rect x="434.5" y="601.5" width="194" height="147"/>
<rect x="633.5" y="601.5" width="195" height="147"/>
<rect x="833.5" y="601.5" width="194" height="147"/>
<rect x="1032.5" y="601.5" width="194" height="147"/>
<rect x="1231.5" y="601.5" width="195" height="147"/>
</g></svg>
<div class="t" style="left:233.5px;top:782px;font-size:12px;color:#6d6d6d;font-weight:400;">Использование</div>
<div class="t" style="left:339.3px;top:782px;font-size:12px;color:#6d6d6d;font-weight:400;">Скорость</div>
<div class="t" style="left:233.5px;top:805px;font-size:18.6px;color:#000;font-weight:400;">3%</div>
<div class="t" style="left:339.3px;top:805px;font-size:18.6px;color:#000;font-weight:400;">3,56 ГГц</div>
<div class="t" style="left:233.5px;top:833px;font-size:12px;color:#6d6d6d;font-weight:400;">Процессы</div>
<div class="t" style="left:310.4px;top:833px;font-size:12px;color:#6d6d6d;font-weight:400;">Потоки</div>
<div class="t" style="left:374.4px;top:833px;font-size:12px;color:#6d6d6d;font-weight:400;">Дескрипторы</div>
<div class="t" style="left:233.5px;top:856px;font-size:18.6px;color:#000;font-weight:400;letter-spacing:0.7px;">295</div>
<div class="t" style="left:310.4px;top:856px;font-size:18.6px;color:#000;font-weight:400;letter-spacing:0.7px;">6418</div>
<div class="t" style="left:374.4px;top:856px;font-size:18.6px;color:#000;font-weight:400;letter-spacing:0.6px;">134913</div>
<div class="t" style="left:233.5px;top:884px;font-size:12px;color:#6d6d6d;font-weight:400;">Время работы</div>
<div class="t" style="left:233.5px;top:907px;font-size:18.6px;color:#000;font-weight:400;">0:00:05:51</div>
<div class="t" style="left:461.4px;top:782px;font-size:12px;color:#6d6d6d;font-weight:400;">Базовая скорость:</div>
<div class="t" style="left:619px;top:782px;font-size:12px;color:#000;font-weight:400;">3,70 ГГц</div>
<div class="t" style="left:461.4px;top:800px;font-size:12px;color:#6d6d6d;font-weight:400;">Сокетов:</div>
<div class="t" style="left:619px;top:800px;font-size:12px;color:#000;font-weight:400;">1</div>
<div class="t" style="left:461.4px;top:818px;font-size:12px;color:#6d6d6d;font-weight:400;">Ядра:</div>
<div class="t" style="left:619px;top:818px;font-size:12px;color:#000;font-weight:400;">12</div>
<div class="t" style="left:461.4px;top:836px;font-size:12px;color:#6d6d6d;font-weight:400;">Логических процессоров:</div>
<div class="t" style="left:619px;top:836px;font-size:12px;color:#000;font-weight:400;">24</div>
<div class="t" style="left:461.4px;top:854px;font-size:12px;color:#6d6d6d;font-weight:400;">Виртуализация:</div>
<div class="t" style="left:619px;top:854px;font-size:12px;color:#000;font-weight:400;">Отключено</div>
<div class="t" style="left:461.4px;top:872px;font-size:12px;color:#6d6d6d;font-weight:400;">Поддержка Hyper-V:</div>
<div class="t" style="left:619px;top:872px;font-size:12px;color:#000;font-weight:400;">Да</div>
<div class="t" style="left:461.4px;top:890px;font-size:12px;color:#6d6d6d;font-weight:400;">Кэш L1:</div>
<div class="t" style="left:619px;top:890px;font-size:12px;color:#000;font-weight:400;">768 КБ</div>
<div class="t" style="left:461.4px;top:908px;font-size:12px;color:#6d6d6d;font-weight:400;">Кэш L2:</div>
<div class="t" style="left:619px;top:908px;font-size:12px;color:#000;font-weight:400;">6,0 МБ</div>
<div class="t" style="left:461.4px;top:926px;font-size:12px;color:#6d6d6d;font-weight:400;">Кэш L3:</div>
<div class="t" style="left:619px;top:926px;font-size:12px;color:#000;font-weight:400;">64,0 МБ</div>
<svg style="position:absolute;left:0;top:965px" width="115" height="30">
<circle cx="12.4" cy="14.5" r="9.2" fill="none" stroke="#a6a6a6" stroke-width="1"/>
<path d="M8 16.4 L12.4 11.4 L16.9 16.4" fill="none" stroke="#a6a6a6" stroke-width="1.2"/>
<rect x="84" y="7" width="1" height="14" fill="#d4d4d4"/>
<circle cx="101" cy="14" r="7.1" fill="#f7f7f7" stroke="#6e6e6e" stroke-width="1.4"/>
<path d="M96.4 16.3 L96.4 12.2 M99.5 9.6 Q103.5 9.3 104.6 11.6" fill="none" stroke="#7d9a82" stroke-width="0.9"/>
<path d="M105.5 12.2 L105.3 15.5 Q105 16.5 104.2 16.6" fill="none" stroke="#f07a2a" stroke-width="1.1"/>
<path d="M96.6 9.6 L98.1 8.9 L103.3 15.6 L101.7 16.8 Z" fill="#d40000"/>
</svg>
<div class="t" style="left:29.5px;top:980px;font-size:12px;color:#000;font-weight:400;">Меньше</div>
<div class="t" style="left:114.6px;top:980px;font-size:12px;color:#0066cc;font-weight:400;">Открыть монитор ресурсов</div>
<div id="aida" style="position:absolute;left:866px;top:477px;width:539px;height:518px;overflow:hidden;background:#4b4f5a;">
<div style="position:absolute;left:0;top:0;width:539px;height:513px;background:linear-gradient(150deg, rgba(255,255,255,0) 0%, rgba(255,255,255,0.03) 18%, rgba(255,255,255,0) 30%, rgba(255,255,255,0.035) 47%, rgba(255,255,255,0) 60%, rgba(255,255,255,0.03) 78%, rgba(255,255,255,0.0) 90%, rgba(255,255,255,0.025) 100%),linear-gradient(150deg, rgba(255,255,255,0) 0.00%, rgba(255,255,255,0.024) 0.26%, rgba(255,255,255,0) 0.51%, rgba(255,255,255,0) 2.31%, rgba(255,255,255,0.026) 2.73%, rgba(255,255,255,0) 3.16%, rgba(255,255,255,0) 4.13%, rgba(255,255,255,0.031) 4.29%, rgba(255,255,255,0) 4.45%, rgba(255,255,255,0) 5.95%, rgba(255,255,255,0.035) 6.20%, rgba(255,255,255,0) 6.46%, rgba(255,255,255,0) 8.53%, rgba(255,255,255,0.022) 9.05%, rgba(255,255,255,0) 9.58%, rgba(255,255,255,0) 12.10%, rgba(255,255,255,0.026) 12.32%, rgba(255,255,255,0) 12.54%, rgba(255,255,255,0) 15.68%, rgba(255,255,255,0.029) 16.07%, rgba(255,255,255,0) 16.45%, rgba(255,255,255,0) 19.07%, rgba(255,255,255,0.029) 19.25%, rgba(255,255,255,0) 19.43%, rgba(255,255,255,0) 21.82%, rgba(255,255,255,0.011) 22.11%, rgba(255,255,255,0) 22.39%, rgba(255,255,255,0) 25.53%, rgba(255,255,255,0.028) 25.89%, rgba(255,255,255,0) 26.25%, rgba(255,255,255,0) 29.43%, rgba(255,255,255,0.033) 29.90%, rgba(255,255,255,0) 30.37%, rgba(255,255,255,0) 32.24%, rgba(255,255,255,0.021) 32.75%, rgba(255,255,255,0) 33.26%, rgba(255,255,255,0) 36.58%, rgba(255,255,255,0.012) 37.13%, rgba(255,255,255,0) 37.67%, rgba(255,255,255,0) 38.84%, rgba(255,255,255,0.034) 39.09%, rgba(255,255,255,0) 39.34%, rgba(255,255,255,0) 41.31%, rgba(255,255,255,0.018) 41.75%, rgba(255,255,255,0) 42.18%, rgba(255,255,255,0) 44.35%, rgba(255,255,255,0.019) 44.67%, rgba(255,255,255,0) 45.00%, rgba(255,255,255,0) 47.37%, rgba(255,255,255,0.033) 47.79%, rgba(255,255,255,0) 48.20%, rgba(255,255,255,0) 50.84%, rgba(255,255,255,0.031) 51.41%, rgba(255,255,255,0) 51.98%, rgba(255,255,255,0) 55.45%, rgba(255,255,255,0.014) 55.91%, rgba(255,255,255,0) 56.36%, rgba(255,255,255,0) 59.48%, rgba(255,255,255,0.033) 60.07%, rgba(255,255,255,0) 60.65%, rgba(255,255,255,0) 62.99%, rgba(255,255,255,0.015) 63.46%, rgba(255,255,255,0) 63.93%, rgba(255,255,255,0) 66.97%, rgba(255,255,255,0.017) 67.38%, rgba(255,255,255,0) 67.79%, rgba(255,255,255,0) 68.76%, rgba(255,255,255,0.035) 69.30%, rgba(255,255,255,0) 69.83%, rgba(255,255,255,0) 70.87%, rgba(255,255,255,0.020) 71.38%, rgba(255,255,255,0) 71.89%, rgba(255,255,255,0) 73.10%, rgba(255,255,255,0.029) 73.38%, rgba(255,255,255,0) 73.66%, rgba(255,255,255,0) 76.82%, rgba(255,255,255,0.025) 76.99%, rgba(255,255,255,0) 77.16%, rgba(255,255,255,0) 78.08%, rgba(255,255,255,0.018) 78.55%, rgba(255,255,255,0) 79.03%, rgba(255,255,255,0) 82.20%, rgba(255,255,255,0.023) 82.80%, rgba(255,255,255,0) 83.39%, rgba(255,255,255,0) 86.88%, rgba(255,255,255,0.012) 87.17%, rgba(255,255,255,0) 87.46%, rgba(255,255,255,0) 89.88%, rgba(255,255,255,0.015) 90.04%, rgba(255,255,255,0) 90.21%, rgba(255,255,255,0) 92.11%, rgba(255,255,255,0.014) 92.54%, rgba(255,255,255,0) 92.96%, rgba(255,255,255,0) 93.87%, rgba(255,255,255,0.018) 94.41%, rgba(255,255,255,0) 94.96%, rgba(255,255,255,0) 98.34%, rgba(255,255,255,0.019) 98.90%, rgba(255,255,255,0) 99.45%);"></div>
<div style="position:absolute;left:0;top:513px;width:539px;height:5px;background:#586779"></div>
</div>
<div class="t" style="left:874px;top:494px;font-size:15px;color:#f6f6f6;font-weight:700;">AIDA64 Cache &amp; Memory Benchmark</div>
<div style="position:absolute;left:1331px;top:491px;width:11px;height:1px;background:#f0f0f0"></div>
<svg style="position:absolute;left:1370px;top:480px" width="24" height="24"><path d="M7 6.5 L17 16.5 M17 6.5 L7 16.5" stroke="#f2f2f2" stroke-width="1.5"/></svg>
<div style="position:absolute;left:874px;top:515px;width:523px;height:435px;box-sizing:border-box;border:1px solid #aeb0b5"></div>
<div class="t" style="left:1017px;top:536px;font-size:11.3px;color:#f2f2f2;font-weight:400;">Read</div>
<div class="t" style="left:1118.4px;top:536px;font-size:11.3px;color:#f2f2f2;font-weight:400;">Write</div>
<div class="t" style="left:1221.5px;top:536px;font-size:11.3px;color:#f2f2f2;font-weight:400;">Copy</div>
<div class="t" style="left:1316.8px;top:536px;font-size:11.3px;color:#f2f2f2;font-weight:400;">Latency</div>
<svg style="position:absolute;left:1055px;top:526px" width="18" height="18"><circle cx="9" cy="9" r="8.1" fill="#6fb0c2"/><circle cx="9.3" cy="4.6" r="1.5" fill="#fff"/><rect x="7.9" y="7.2" width="3" height="7.3" fill="#fff"/><rect x="6.8" y="7.2" width="1.3" height="1.3" fill="#fff"/></svg>
<svg style="position:absolute;left:1159px;top:526px" width="18" height="18"><circle cx="9" cy="9" r="8.1" fill="#6fb0c2"/><circle cx="9.3" cy="4.6" r="1.5" fill="#fff"/><rect x="7.9" y="7.2" width="3" height="7.3" fill="#fff"/><rect x="6.8" y="7.2" width="1.3" height="1.3" fill="#fff"/></svg>
<svg style="position:absolute;left:1259px;top:526px" width="18" height="18"><circle cx="9" cy="9" r="8.1" fill="#6fb0c2"/><circle cx="9.3" cy="4.6" r="1.5" fill="#fff"/><rect x="7.9" y="7.2" width="3" height="7.3" fill="#fff"/><rect x="6.8" y="7.2" width="1.3" height="1.3" fill="#fff"/></svg>
<div class="t" style="left:887.5px;top:562px;font-size:11.3px;color:#f2f2f2;font-weight:400;">Memory</div>
<div style="position:absolute;left:983px;top:551px;width:94px;height:20px;box-sizing:border-box;border:1px solid #bcbec2;background:rgba(255,255,255,0.045);box-shadow:0 0 0 1px rgba(0,0,0,0.10), inset 0 0 0 1px rgba(0,0,0,0.10);"></div>
<div class="t" style="left:830px;width:400px;text-align:center;top:562px;font-size:11.3px;color:#f2f2f2;font-weight:400;">32544 MB/s</div>
<div style="position:absolute;left:1085px;top:551px;width:94px;height:20px;box-sizing:border-box;border:1px solid #bcbec2;background:rgba(255,255,255,0.045);box-shadow:0 0 0 1px rgba(0,0,0,0.10), inset 0 0 0 1px rgba(0,0,0,0.10);"></div>
<div class="t" style="left:932px;width:400px;text-align:center;top:562px;font-size:11.3px;color:#f2f2f2;font-weight:400;">31671 MB/s</div>
<div style="position:absolute;left:1187px;top:551px;width:94px;height:20px;box-sizing:border-box;border:1px solid #bcbec2;background:rgba(255,255,255,0.045);box-shadow:0 0 0 1px rgba(0,0,0,0.10), inset 0 0 0 1px rgba(0,0,0,0.10);"></div>
<div class="t" style="left:1034px;width:400px;text-align:center;top:562px;font-size:11.3px;color:#f2f2f2;font-weight:400;">29519 MB/s</div>
<div style="position:absolute;left:1289px;top:551px;width:94px;height:20px;box-sizing:border-box;border:1px solid #bcbec2;background:rgba(255,255,255,0.045);box-shadow:0 0 0 1px rgba(0,0,0,0.10), inset 0 0 0 1px rgba(0,0,0,0.10);"></div>
<div class="t" style="left:1136px;width:400px;text-align:center;top:562px;font-size:11.3px;color:#f2f2f2;font-weight:400;">104.6 ns</div>
<div class="t" style="left:887.5px;top:602px;font-size:11.3px;color:#f2f2f2;font-weight:400;">L1 Cache</div>
<div style="position:absolute;left:983px;top:591px;width:94px;height:20px;box-sizing:border-box;border:1px solid #bcbec2;background:rgba(255,255,255,0.045);box-shadow:0 0 0 1px rgba(0,0,0,0.10), inset 0 0 0 1px rgba(0,0,0,0.10);"></div>
<div class="t" style="left:830px;width:400px;text-align:center;top:602px;font-size:11.3px;color:#f2f2f2;font-weight:400;">2696.4 GB/s</div>
<div style="position:absolute;left:1085px;top:591px;width:94px;height:20px;box-sizing:border-box;border:1px solid #bcbec2;background:rgba(255,255,255,0.045);box-shadow:0 0 0 1px rgba(0,0,0,0.10), inset 0 0 0 1px rgba(0,0,0,0.10);"></div>
<div class="t" style="left:932px;width:400px;text-align:center;top:602px;font-size:11.3px;color:#f2f2f2;font-weight:400;">1373.2 GB/s</div>
<div style="position:absolute;left:1187px;top:591px;width:94px;height:20px;box-sizing:border-box;border:1px solid #bcbec2;background:rgba(255,255,255,0.045);box-shadow:0 0 0 1px rgba(0,0,0,0.10), inset 0 0 0 1px rgba(0,0,0,0.10);"></div>
<div class="t" style="left:1034px;width:400px;text-align:center;top:602px;font-size:11.3px;color:#f2f2f2;font-weight:400;">2725.7 GB/s</div>
<div style="position:absolute;left:1289px;top:591px;width:94px;height:20px;box-sizing:border-box;border:1px solid #bcbec2;background:rgba(255,255,255,0.045);box-shadow:0 0 0 1px rgba(0,0,0,0.10), inset 0 0 0 1px rgba(0,0,0,0.10);"></div>
<div class="t" style="left:1136px;width:400px;text-align:center;top:602px;font-size:11.3px;color:#f2f2f2;font-weight:400;">1.1 ns</div>
<div class="t" style="left:887.5px;top:642px;font-size:11.3px;color:#f2f2f2;font-weight:400;">L2 Cache</div>
<div style="position:absolute;left:983px;top:631px;width:94px;height:20px;box-sizing:border-box;border:1px solid #bcbec2;background:rgba(255,255,255,0.045);box-shadow:0 0 0 1px rgba(0,0,0,0.10), inset 0 0 0 1px rgba(0,0,0,0.10);"></div>
<div class="t" style="left:830px;width:400px;text-align:center;top:642px;font-size:11.3px;color:#f2f2f2;font-weight:400;">1379.0 GB/s</div>
<div style="position:absolute;left:1085px;top:631px;width:94px;height:20px;box-sizing:border-box;border:1px solid #bcbec2;background:rgba(255,255,255,0.045);box-shadow:0 0 0 1px rgba(0,0,0,0.10), inset 0 0 0 1px rgba(0,0,0,0.10);"></div>
<div class="t" style="left:932px;width:400px;text-align:center;top:642px;font-size:11.3px;color:#f2f2f2;font-weight:400;">1222.9 GB/s</div>
<div style="position:absolute;left:1187px;top:631px;width:94px;height:20px;box-sizing:border-box;border:1px solid #bcbec2;background:rgba(255,255,255,0.045);box-shadow:0 0 0 1px rgba(0,0,0,0.10), inset 0 0 0 1px rgba(0,0,0,0.10);"></div>
<div class="t" style="left:1034px;width:400px;text-align:center;top:642px;font-size:11.3px;color:#f2f2f2;font-weight:400;">1348.2 GB/s</div>
<div style="position:absolute;left:1289px;top:631px;width:94px;height:20px;box-sizing:border-box;border:1px solid #bcbec2;background:rgba(255,255,255,0.045);box-shadow:0 0 0 1px rgba(0,0,0,0.10), inset 0 0 0 1px rgba(0,0,0,0.10);"></div>
<div class="t" style="left:1136px;width:400px;text-align:center;top:642px;font-size:11.3px;color:#f2f2f2;font-weight:400;">3.4 ns</div>
<div class="t" style="left:887.5px;top:682px;font-size:11.3px;color:#f2f2f2;font-weight:400;">L3 Cache</div>
<div style="position:absolute;left:983px;top:671px;width:94px;height:20px;box-sizing:border-box;border:1px solid #bcbec2;background:rgba(255,255,255,0.045);box-shadow:0 0 0 1px rgba(0,0,0,0.10), inset 0 0 0 1px rgba(0,0,0,0.10);"></div>
<div class="t" style="left:830px;width:400px;text-align:center;top:682px;font-size:11.3px;color:#f2f2f2;font-weight:400;">773.93 GB/s</div>
<div style="position:absolute;left:1085px;top:671px;width:94px;height:20px;box-sizing:border-box;border:1px solid #bcbec2;background:rgba(255,255,255,0.045);box-shadow:0 0 0 1px rgba(0,0,0,0.10), inset 0 0 0 1px rgba(0,0,0,0.10);"></div>
<div class="t" style="left:932px;width:400px;text-align:center;top:682px;font-size:11.3px;color:#f2f2f2;font-weight:400;">775.84 GB/s</div>
<div style="position:absolute;left:1187px;top:671px;width:94px;height:20px;box-sizing:border-box;border:1px solid #bcbec2;background:rgba(255,255,255,0.045);box-shadow:0 0 0 1px rgba(0,0,0,0.10), inset 0 0 0 1px rgba(0,0,0,0.10);"></div>
<div class="t" style="left:1034px;width:400px;text-align:center;top:682px;font-size:11.3px;color:#f2f2f2;font-weight:400;">751.18 GB/s</div>
<div style="position:absolute;left:1289px;top:671px;width:94px;height:20px;box-sizing:border-box;border:1px solid #bcbec2;background:rgba(255,255,255,0.045);box-shadow:0 0 0 1px rgba(0,0,0,0.10), inset 0 0 0 1px rgba(0,0,0,0.10);"></div>
<div class="t" style="left:1136px;width:400px;text-align:center;top:682px;font-size:11.3px;color:#f2f2f2;font-weight:400;">16.5 ns</div>
<div style="position:absolute;left:983px;top:711px;width:400px;height:20px;box-sizing:border-box;border:1px solid #bcbec2;background:rgba(255,255,255,0.045);box-shadow:0 0 0 1px rgba(0,0,0,0.10), inset 0 0 0 1px rgba(0,0,0,0.10);"></div>
<div class="t" style="left:887.5px;top:721px;font-size:11.3px;color:#f2f2f2;font-weight:400;">CPU Type</div>
<div class="t" style="left:988.4px;top:721px;font-size:11.3px;color:#f2f2f2;font-weight:400;letter-spacing:-0.2px;">12-Core AMD Ryzen 9 5900X&nbsp; (Vermeer, Socket AM4)</div>
<div style="position:absolute;left:983px;top:730px;width:400px;height:20px;box-sizing:border-box;border:1px solid #bcbec2;background:rgba(255,255,255,0.045);box-shadow:0 0 0 1px rgba(0,0,0,0.10), inset 0 0 0 1px rgba(0,0,0,0.10);"></div>
<div class="t" style="left:887.5px;top:740px;font-size:11.3px;color:#f2f2f2;font-weight:400;">CPU Stepping</div>
<div class="t" style="left:988.4px;top:740px;font-size:11.3px;color:#f2f2f2;font-weight:400;">VMR-B2</div>
<div style="position:absolute;left:983px;top:749px;width:400px;height:20px;box-sizing:border-box;border:1px solid #bcbec2;background:rgba(255,255,255,0.045);box-shadow:0 0 0 1px rgba(0,0,0,0.10), inset 0 0 0 1px rgba(0,0,0,0.10);"></div>
<div class="t" style="left:887.5px;top:759px;font-size:11.3px;color:#f2f2f2;font-weight:400;">CPU Clock</div>
<div class="t" style="left:988.4px;top:759px;font-size:11.3px;color:#f2f2f2;font-weight:400;">3693.0 MHz</div>
<div style="position:absolute;left:983px;top:768px;width:400px;height:20px;box-sizing:border-box;border:1px solid #bcbec2;background:rgba(255,255,255,0.045);box-shadow:0 0 0 1px rgba(0,0,0,0.10), inset 0 0 0 1px rgba(0,0,0,0.10);"></div>
<div class="t" style="left:887.5px;top:778px;font-size:11.3px;color:#f2f2f2;font-weight:400;">CPU FSB</div>
<div class="t" style="left:988.4px;top:778px;font-size:11.3px;color:#f2f2f2;font-weight:400;">99.8 MHz&nbsp; (original: 100 MHz)</div>
<div style="position:absolute;left:983px;top:787px;width:94px;height:20px;box-sizing:border-box;border:1px solid #bcbec2;background:rgba(255,255,255,0.045);box-shadow:0 0 0 1px rgba(0,0,0,0.10), inset 0 0 0 1px rgba(0,0,0,0.10);"></div>
<div class="t" style="left:887.5px;top:797px;font-size:11.3px;color:#f2f2f2;font-weight:400;">CPU Multiplier</div>
<div class="t" style="left:988.4px;top:797px;font-size:11.3px;color:#f2f2f2;font-weight:400;">37x</div>
<div class="t" style="left:1182.3px;top:797px;font-size:11.3px;color:#f2f2f2;font-weight:400;">North Bridge Clock</div>
<div style="position:absolute;left:1289px;top:787px;width:94px;height:20px;box-sizing:border-box;border:1px solid #bcbec2;background:rgba(255,255,255,0.045);box-shadow:0 0 0 1px rgba(0,0,0,0.10), inset 0 0 0 1px rgba(0,0,0,0.10);"></div>
<div class="t" style="left:1294.5px;top:797px;font-size:11.3px;color:#f2f2f2;font-weight:400;">1064.7 MHz</div>
<div style="position:absolute;left:983px;top:825px;width:94px;height:20px;box-sizing:border-box;border:1px solid #bcbec2;background:rgba(255,255,255,0.045);box-shadow:0 0 0 1px rgba(0,0,0,0.10), inset 0 0 0 1px rgba(0,0,0,0.10);"></div>
<div class="t" style="left:887.5px;top:835px;font-size:11.3px;color:#f2f2f2;font-weight:400;">Memory Bus</div>
<div class="t" style="left:988.4px;top:835px;font-size:11.3px;color:#f2f2f2;font-weight:400;">1064.7 MHz</div>
<div class="t" style="left:1182.3px;top:835px;font-size:11.3px;color:#f2f2f2;font-weight:400;">DRAM:FSB Ratio</div>
<div style="position:absolute;left:1289px;top:825px;width:94px;height:20px;box-sizing:border-box;border:1px solid #bcbec2;background:rgba(255,255,255,0.045);box-shadow:0 0 0 1px rgba(0,0,0,0.10), inset 0 0 0 1px rgba(0,0,0,0.10);"></div>
<div class="t" style="left:1294.5px;top:835px;font-size:11.3px;color:#f2f2f2;font-weight:400;">32:3</div>
<div style="position:absolute;left:983px;top:844px;width:400px;height:20px;box-sizing:border-box;border:1px solid #bcbec2;background:rgba(255,255,255,0.045);box-shadow:0 0 0 1px rgba(0,0,0,0.10), inset 0 0 0 1px rgba(0,0,0,0.10);"></div>
<div class="t" style="left:887.5px;top:854px;font-size:11.3px;color:#f2f2f2;font-weight:400;">Memory Type</div>
<div class="t" style="left:988.4px;top:854px;font-size:11.3px;color:#f2f2f2;font-weight:400;letter-spacing:-0.2px;">Dual Channel DDR4-2133 SDRAM&nbsp; (15-15-15-36 CR1)</div>
<div style="position:absolute;left:983px;top:863px;width:400px;height:20px;box-sizing:border-box;border:1px solid #bcbec2;background:rgba(255,255,255,0.045);box-shadow:0 0 0 1px rgba(0,0,0,0.10), inset 0 0 0 1px rgba(0,0,0,0.10);"></div>
<div class="t" style="left:887.5px;top:873px;font-size:11.3px;color:#f2f2f2;font-weight:400;">Chipset</div>
<div class="t" style="left:988.4px;top:873px;font-size:11.3px;color:#f2f2f2;font-weight:400;letter-spacing:-0.2px;">AMD X470, AMD K19.2 FCH, AMD K19.2 IMC</div>
<div style="position:absolute;left:983px;top:882px;width:400px;height:20px;box-sizing:border-box;border:1px solid #bcbec2;background:rgba(255,255,255,0.045);box-shadow:0 0 0 1px rgba(0,0,0,0.10), inset 0 0 0 1px rgba(0,0,0,0.10);"></div>
<div class="t" style="left:887.5px;top:892px;font-size:11.3px;color:#f2f2f2;font-weight:400;">Motherboard</div>
<div class="t" style="left:988.4px;top:892px;font-size:11.3px;color:#f2f2f2;font-weight:400;">Asus ROG Crosshair VII Hero</div>
<div style="position:absolute;left:983px;top:901px;width:400px;height:20px;box-sizing:border-box;border:1px solid #bcbec2;background:rgba(255,255,255,0.045);box-shadow:0 0 0 1px rgba(0,0,0,0.10), inset 0 0 0 1px rgba(0,0,0,0.10);"></div>
<div class="t" style="left:887.5px;top:911px;font-size:11.3px;color:#f2f2f2;font-weight:400;">BIOS Version</div>
<div class="t" style="left:988.4px;top:911px;font-size:11.3px;color:#f2f2f2;font-weight:400;">5102</div>
<div class="t" style="right:49.5px;top:936px;font-size:11px;color:#b4b6ba;font-weight:400;">AIDA64 v6.90.6500 / BenchDLL 4.6.876.8-x64&nbsp; (c) 1995-2023 FinalWire Ltd.</div>
<div style="position:absolute;left:874px;top:959px;width:75px;height:21px;background:#70afc0;box-shadow:inset 0 -2px 0 #80cad6"></div>
<div class="t" style="left:711.5px;width:400px;text-align:center;top:969px;font-size:11.3px;color:#ffffff;font-weight:400;"><u>S</u>ave</div>
<div style="position:absolute;left:1082px;top:959px;width:109px;height:21px;background:#70afc0;box-shadow:inset 0 -2px 0 #80cad6"></div>
<div class="t" style="left:936.5px;width:400px;text-align:center;top:969px;font-size:11.3px;color:#ffffff;font-weight:400;">Start <u>B</u>enchmark</div>
<div style="position:absolute;left:1323px;top:959px;width:74px;height:21px;background:#70afc0;box-shadow:inset 0 -2px 0 #80cad6"></div>
<div class="t" style="left:1160.0px;width:400px;text-align:center;top:969px;font-size:11.3px;color:#ffffff;font-weight:400;"><u>C</u>lose</div>
</body></html>
